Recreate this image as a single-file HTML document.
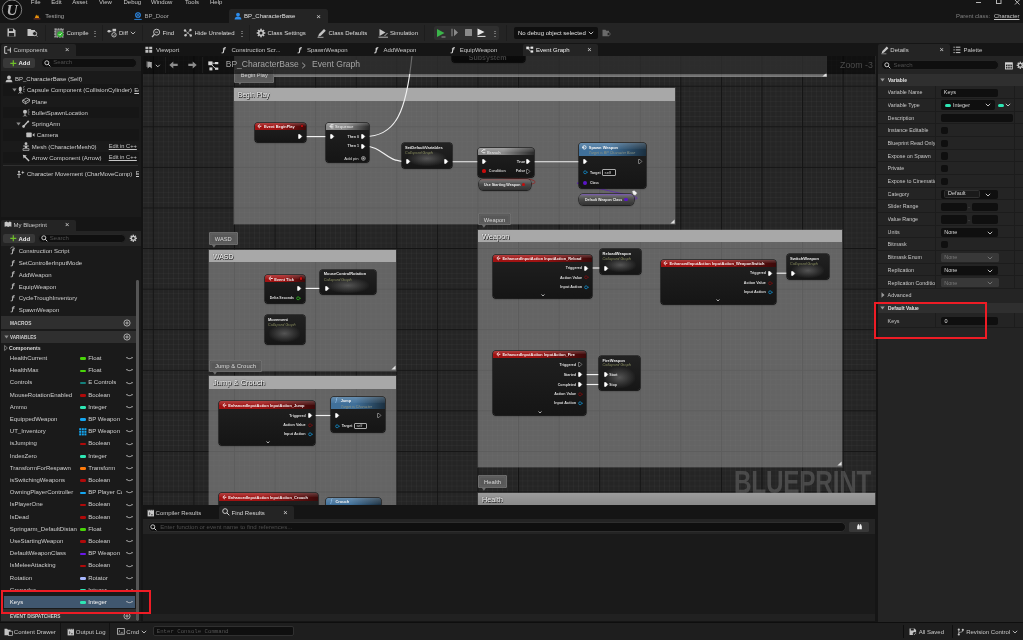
<!DOCTYPE html>
<html lang="en"><head><meta charset="utf-8"><title>BP_CharacterBase</title><style>html,body{margin:0;padding:0;background:#151515;}body{width:1023px;height:640px;position:relative;overflow:hidden;font-family:'Liberation Sans',sans-serif;}div,span.t,svg{position:absolute;}#app{left:0;top:0;width:1023px;height:640px;will-change:transform;overflow:hidden;}span.t{white-space:nowrap;}svg{overflow:visible;}</style></head><body><div id="app">
<div style="left:0.00px;top:0.00px;width:1023.00px;height:22.50px;background:#151515;"></div>
<svg style="left:1.00px;top:-1.00px;" width="22" height="22" viewBox="0 0 22 22"><circle cx="11" cy="10.7" r="9.7" fill="#0e0e0e" stroke="#8c8c8c" stroke-width="0.9"/><text x="11.2" y="16.2" text-anchor="middle" font-family="Liberation Serif,serif" font-weight="700" font-style="italic" font-size="15.5" fill="#b4b4b4">U</text></svg>
<span class="t" style="top:-1.70px;font-size:6.0px;line-height:8.4px;color:#c8c8c8;left:30.80px;">File</span>
<span class="t" style="top:-1.70px;font-size:6.0px;line-height:8.4px;color:#c8c8c8;left:51.30px;">Edit</span>
<span class="t" style="top:-1.70px;font-size:6.0px;line-height:8.4px;color:#c8c8c8;left:72.30px;">Asset</span>
<span class="t" style="top:-1.70px;font-size:6.0px;line-height:8.4px;color:#c8c8c8;left:99.00px;">View</span>
<span class="t" style="top:-1.70px;font-size:6.0px;line-height:8.4px;color:#c8c8c8;left:123.50px;">Debug</span>
<span class="t" style="top:-1.70px;font-size:6.0px;line-height:8.4px;color:#c8c8c8;left:151.00px;">Window</span>
<span class="t" style="top:-1.70px;font-size:6.0px;line-height:8.4px;color:#c8c8c8;left:185.00px;">Tools</span>
<span class="t" style="top:-1.70px;font-size:6.0px;line-height:8.4px;color:#c8c8c8;left:210.00px;">Help</span>
<svg style="left:974.00px;top:0.00px;" width="48" height="6" viewBox="0 0 48 6"><path d="M2 2.5h5" stroke="#c8c8c8" stroke-width="0.9" fill="none"/><rect x="22.5" y="-1" width="4.5" height="4.5" stroke="#c8c8c8" stroke-width="0.9" fill="none"/><path d="M41 0l4.5 4.5M45.5 0l-4.5 4.5" stroke="#c8c8c8" stroke-width="0.9" fill="none"/></svg>
<svg style="left:33.00px;top:11.50px;" width="8" height="8" viewBox="0 0 8 8"><path d="M1.8 6L3.2 2.4l1 1.8L5 2.8 6.2 6z" fill="#e8930c"/><path d="M0.6 6.9h6.8" stroke="#8c3a2c" stroke-width="0.9"/></svg>
<span class="t" style="top:12.20px;font-size:6.0px;line-height:8.4px;color:#a8a8a8;left:45.20px;">Testing</span>
<svg style="left:133.50px;top:11.50px;" width="8" height="8" viewBox="0 0 8 8"><circle cx="4" cy="3" r="2.3" fill="none" stroke="#2d8ceb" stroke-width="1.1"/><path d="M0.3 7.4h7.4" stroke="#2d8ceb" stroke-width="0.9"/><circle cx="4" cy="3" r="0.9" fill="#2d8ceb"/></svg>
<span class="t" style="top:12.20px;font-size:6.0px;line-height:8.4px;color:#a8a8a8;left:144.50px;">BP_Door</span>
<div style="left:229.00px;top:8.80px;width:98.50px;height:14.00px;background:#242424;border-radius:2.5px 2.5px 0 0;"></div>
<svg style="left:233.50px;top:11.50px;" width="8" height="8" viewBox="0 0 8 8"><circle cx="4" cy="2.6" r="1.9" fill="#2d8ceb"/><path d="M0.6 7.6c0-2.3 1.4-3.2 3.4-3.2s3.4 0.9 3.4 3.2z" fill="#2d8ceb"/></svg>
<span class="t" style="top:12.20px;font-size:6.0px;line-height:8.4px;color:#e0e0e0;left:244.00px;">BP_CharacterBase</span>
<span class="t" style="top:10.80px;font-size:8px;line-height:11.2px;color:#d0d0d0;left:318.50px;transform:translateX(-50%);">×</span>
<span class="t" style="top:11.97px;font-size:5.9px;line-height:8.26px;color:#808080;left:956.00px;">Parent class:</span>
<span class="t" style="top:12.04px;font-size:5.8px;line-height:8.12px;color:#c8c8c8;left:994.00px;text-decoration:underline;">Character</span>
<div style="left:0.00px;top:22.50px;width:1023.00px;height:20.50px;background:#242424;"></div>
<svg style="left:7.00px;top:28.00px;" width="9" height="9" viewBox="0 0 9 9"><path d="M0.5 0.5h6l2 2v6h-8z" fill="#c4c4c4"/><rect x="2" y="0.5" width="4" height="2.6" fill="#242424"/><rect x="1.8" y="5" width="5.4" height="3.5" fill="#242424"/></svg>
<svg style="left:27.00px;top:28.00px;" width="11" height="9" viewBox="0 0 11 9"><path d="M0.5 1h3l1 1h3.5v6h-7.5z" fill="#c4c4c4"/><circle cx="7.6" cy="5.6" r="2.1" fill="#242424" stroke="#c4c4c4" stroke-width="0.9"/><path d="M9 7.2l1.4 1.4" stroke="#c4c4c4" stroke-width="0.9"/></svg>
<div style="left:45.00px;top:24.50px;width:0.80px;height:16.50px;background:#1d1d1d;"></div>
<svg style="left:54.00px;top:27.50px;" width="10" height="10" viewBox="0 0 10 10"><rect x="1" y="1" width="8" height="8" fill="#6a6a6a" stroke="#c4c4c4" stroke-width="1.1" stroke-dasharray="1.8 0.8"/><circle cx="6.2" cy="6.2" r="3" fill="#34b233"/><path d="M4.8 6.2l1 1 1.8-2" stroke="#fff" stroke-width="0.8" fill="none"/></svg>
<span class="t" style="top:28.90px;font-size:6.0px;line-height:8.4px;color:#dcdcdc;left:66.50px;">Compile</span>
<span class="t" style="top:27.50px;font-size:8px;line-height:11.2px;color:#c0c0c0;left:94.70px;transform:translateX(-50%);">⋮</span>
<div style="left:101.50px;top:24.50px;width:0.80px;height:16.50px;background:#1d1d1d;"></div>
<svg style="left:107.00px;top:27.50px;" width="11" height="10" viewBox="0 0 11 10"><path d="M0.5 3.2h4" stroke="#c4c4c4" stroke-width="1"/><circle cx="2" cy="3.2" r="1.3" fill="#c4c4c4"/><rect x="5.5" y="0.8" width="3.6" height="2.6" fill="#c4c4c4"/><circle cx="7" cy="6.8" r="2.2" fill="none" stroke="#c4c4c4" stroke-width="0.9"/><path d="M6 6.8l0.8 0.8 1.3-1.5" stroke="#c4c4c4" stroke-width="0.7" fill="none"/></svg>
<span class="t" style="top:28.90px;font-size:6.0px;line-height:8.4px;color:#dcdcdc;left:119.00px;">Diff</span>
<svg style="left:130.00px;top:30.50px;" width="6" height="4" viewBox="0 0 6 4"><path d="M0.8 0.8l2.2 2.2 2.2-2.2" stroke="#c4c4c4" stroke-width="0.9" fill="none"/></svg>
<div style="left:142.00px;top:24.50px;width:0.80px;height:16.50px;background:#1d1d1d;"></div>
<svg style="left:151.00px;top:27.50px;" width="10" height="10" viewBox="0 0 10 10"><circle cx="5.6" cy="4.2" r="3" fill="none" stroke="#c4c4c4" stroke-width="1"/><path d="M3.4 6.4l-2.4 2.6" stroke="#c4c4c4" stroke-width="1.2"/><path d="M4.2 4.2h2.8" stroke="#c4c4c4" stroke-width="0.8"/></svg>
<span class="t" style="top:28.90px;font-size:6.0px;line-height:8.4px;color:#dcdcdc;left:162.50px;">Find</span>
<svg style="left:183.00px;top:27.50px;" width="10" height="10" viewBox="0 0 10 10"><circle cx="2" cy="2.5" r="1.2" fill="#c4c4c4"/><circle cx="7.5" cy="2" r="1.2" fill="#c4c4c4"/><circle cx="7.8" cy="7.5" r="1.2" fill="#c4c4c4"/><circle cx="2.5" cy="7.2" r="1.2" fill="#c4c4c4"/><path d="M2 2.5L7.8 7.5M7.5 2L2.5 7.2" stroke="#c4c4c4" stroke-width="0.7"/></svg>
<span class="t" style="top:28.90px;font-size:6.0px;line-height:8.4px;color:#dcdcdc;left:194.50px;">Hide Unrelated</span>
<span class="t" style="top:27.50px;font-size:8px;line-height:11.2px;color:#c0c0c0;left:242.00px;transform:translateX(-50%);">⋮</span>
<div style="left:248.50px;top:24.50px;width:0.80px;height:16.50px;background:#1d1d1d;"></div>
<svg style="left:256.00px;top:27.80px;" width="10" height="10" viewBox="0 0 10 10"><g transform="translate(5,5)"><rect x="-0.8" y="-4.3" width="1.6" height="8.6" fill="#c4c4c4" transform="rotate(0)"/><rect x="-0.8" y="-4.3" width="1.6" height="8.6" fill="#c4c4c4" transform="rotate(45)"/><rect x="-0.8" y="-4.3" width="1.6" height="8.6" fill="#c4c4c4" transform="rotate(90)"/><rect x="-0.8" y="-4.3" width="1.6" height="8.6" fill="#c4c4c4" transform="rotate(135)"/><circle r="3" fill="#c4c4c4"/><circle r="1.5" fill="#242424"/></g></svg>
<span class="t" style="top:28.90px;font-size:6.0px;line-height:8.4px;color:#dcdcdc;left:267.50px;">Class Settings</span>
<svg style="left:317.00px;top:27.50px;" width="10" height="10" viewBox="0 0 10 10"><path d="M1 8.8l1-2.8 5-5 1.8 1.8-5 5z" fill="#c4c4c4"/><path d="M0.5 9.3h6" stroke="#c4c4c4" stroke-width="0.8"/></svg>
<span class="t" style="top:28.90px;font-size:6.0px;line-height:8.4px;color:#dcdcdc;left:328.50px;">Class Defaults</span>
<svg style="left:378.00px;top:27.50px;" width="11" height="10" viewBox="0 0 11 10"><path d="M1.5 1l6 3.5-6 3.5z" fill="#c4c4c4"/><path d="M0.5 9.2h9.5" stroke="#c4c4c4" stroke-width="0.9"/><path d="M6.5 8l3-3" stroke="#c4c4c4" stroke-width="0.9"/></svg>
<span class="t" style="top:28.90px;font-size:6.0px;line-height:8.4px;color:#dcdcdc;left:390.00px;">Simulation</span>
<div style="left:424.30px;top:24.50px;width:0.80px;height:16.50px;background:#1d1d1d;"></div>
<div style="left:433.50px;top:26.00px;width:65.00px;height:13.50px;background:#2f2f2f;border-radius:2px;"></div>
<div style="left:505.70px;top:24.50px;width:0.80px;height:16.50px;background:#1d1d1d;"></div>
<svg style="left:436.00px;top:27.50px;" width="10" height="10" viewBox="0 0 10 10"><path d="M1 1l7.5 4-7.5 4z" fill="#3bb54a"/><path d="M5.5 9h4" stroke="#b0b0b0" stroke-width="0.8"/></svg>
<svg style="left:451.00px;top:28.00px;" width="8" height="9" viewBox="0 0 8 9"><path d="M1 0.8v7.4" stroke="#8a8a8a" stroke-width="1.1"/><path d="M3 0.8l4 3.7-4 3.7z" fill="#8a8a8a"/></svg>
<div style="left:465.00px;top:29.00px;width:7.00px;height:7.00px;background:#8a8a8a;border-radius:0.5px;"></div>
<svg style="left:476.50px;top:28.00px;" width="9" height="9" viewBox="0 0 9 9"><path d="M0.5 0.5l7 3.5-7 3.5z" fill="#e8e8e8"/><path d="M0.5 8.4h8" stroke="#e8e8e8" stroke-width="1"/></svg>
<span class="t" style="top:27.50px;font-size:8px;line-height:11.2px;color:#c0c0c0;left:494.50px;transform:translateX(-50%);">⋮</span>
<div style="left:514.30px;top:26.60px;width:83.70px;height:12.20px;background:#0f0f0f;border-radius:2px;"></div>
<span class="t" style="top:29.10px;font-size:6.0px;line-height:8.4px;color:#e0e0e0;left:518.00px;">No debug object selected</span>
<svg style="left:587.50px;top:30.80px;" width="6" height="4" viewBox="0 0 6 4"><path d="M0.8 0.8l2.2 2.2 2.2-2.2" stroke="#d0d0d0" stroke-width="0.9" fill="none"/></svg>
<svg style="left:601.50px;top:28.50px;" width="9" height="8" viewBox="0 0 9 8"><path d="M0.5 0.8h3l0.8 0.9h2.7v5.6h-6.5z" fill="#6a6a6a"/><circle cx="6.6" cy="5" r="1.6" fill="#242424" stroke="#6a6a6a" stroke-width="0.7"/></svg>
<div style="left:0.00px;top:43.00px;width:141.00px;height:580.00px;background:#151515;"></div>
<div style="left:1.00px;top:44.00px;width:75.00px;height:12.00px;background:#242424;border-radius:2px 2px 0 0;"></div>
<svg style="left:3.50px;top:46.30px;" width="8" height="8" viewBox="0 0 8 8"><path d="M3.2 0.7h-2.5v6.6h2.5" fill="none" stroke="#c8c8c8" stroke-width="1"/><path d="M3.4 4h3M6.4 1.6v5" fill="none" stroke="#c8c8c8" stroke-width="1"/></svg>
<span class="t" style="top:46.40px;font-size:6.0px;line-height:8.4px;color:#c8c8c8;left:13.50px;">Components</span>
<span class="t" style="top:45.35px;font-size:7.5px;line-height:10.5px;color:#d0d0d0;left:67.30px;transform:translateX(-50%);">×</span>
<div style="left:1.00px;top:56.00px;width:139.50px;height:14.50px;background:#242424;"></div>
<div style="left:3.20px;top:58.00px;width:31.70px;height:9.60px;background:#383838;border-radius:2px;"></div><svg style="left:9.80px;top:59.70px;" width="7" height="7" viewBox="0 0 7 7"><path d="M3.3 0.3v6M0.3 3.3h6" stroke="#6fbf2a" stroke-width="1.2"/></svg><span class="t" style="top:59.00px;font-size:6.0px;line-height:8.4px;color:#e8e8e8;font-weight:700;left:18.40px;">Add</span>
<div style="left:40.80px;top:57.90px;width:96.00px;height:9.70px;background:#0f0f0f;border-radius:4.85px;border:0.5px solid #262626;box-sizing:border-box;"></div><svg style="left:43.80px;top:59.55px;" width="7" height="7" viewBox="0 0 7 7"><circle cx="2.8" cy="2.8" r="2" fill="none" stroke="#d8d8d8" stroke-width="0.9"/><path d="M4.3 4.3l2 2" stroke="#d8d8d8" stroke-width="1"/></svg><span class="t" style="top:58.45px;font-size:6.0px;line-height:8.4px;color:#505050;left:53.20px;">Search</span>
<div style="left:1.00px;top:70.50px;width:139.50px;height:146.50px;background:#1a1a1a;"></div>
<span class="t" style="top:75.15px;font-size:6.0px;line-height:8.4px;color:#cecece;left:15.00px;">BP_CharacterBase (Self)</span>
<svg style="left:5.00px;top:74.75px;" width="8" height="8" viewBox="0 0 8 8"><circle cx="4" cy="2.4" r="1.9" fill="#c0c0c0"/><path d="M0.6 7.2c0-2.2 1.4-2.8 3.4-2.8s3.4 0.6 3.4 2.8z" fill="#c0c0c0"/></svg>
<div style="left:3.00px;top:84.40px;width:135.50px;height:11.20px;background:#161616;"></div>
<span class="t" style="top:86.40px;font-size:6.0px;line-height:8.4px;color:#cecece;left:27.00px;">Capsule Component (CollisionCylinder)</span>
<svg style="left:11.50px;top:88.00px;" width="5" height="4" viewBox="0 0 5 4"><path d="M0.3 0.5h4.4l-2.2 3z" fill="#8a8a8a"/></svg>
<svg style="left:17.00px;top:86.00px;" width="8" height="8" viewBox="0 0 8 8"><ellipse cx="3.3" cy="3" rx="1.6" ry="2.6" fill="#c0c0c0"/><path d="M3.3 5v2.6M1.5 7.6l1.8-2 1.8 2M6 1.5l1.5-1M6 3.2h1.7M6 4.8l1.5 1" stroke="#c0c0c0" stroke-width="0.7" fill="none"/></svg>
<div style="left:134.00px;top:86.00px;width:5.00px;height:8.00px;overflow:hidden;"><span class="t" style="left:0.3px;top:-0.3px;font-size:6.0px;line-height:8.6px;color:#cecece;text-decoration:underline;">Edit in C++</span></div>
<span class="t" style="top:97.65px;font-size:6.0px;line-height:8.4px;color:#cecece;left:31.80px;">Plane</span>
<svg style="left:21.50px;top:97.25px;" width="8" height="8" viewBox="0 0 8 8"><path d="M0.7 3.2l3.8-2 3 1.2-3.8 2.2zM0.7 3.2v2l3 1.6v-2.2M3.7 6.8l3.8-2.4v-2" fill="none" stroke="#c0c0c0" stroke-width="0.8"/></svg>
<div style="left:3.00px;top:106.90px;width:135.50px;height:11.20px;background:#161616;"></div>
<span class="t" style="top:108.90px;font-size:6.0px;line-height:8.4px;color:#cecece;left:31.80px;">BulletSpawnLocation</span>
<svg style="left:21.50px;top:108.50px;" width="8" height="8" viewBox="0 0 8 8"><circle cx="3" cy="2.8" r="2" fill="#c0c0c0"/><path d="M3 4.5v3M1.3 7.5l1.7-1.8 1.7 1.8M5.8 1.5l1.5-1M5.8 3h1.7M5.8 4.5l1.5 1" stroke="#c0c0c0" stroke-width="0.7" fill="none"/></svg>
<span class="t" style="top:120.15px;font-size:6.0px;line-height:8.4px;color:#cecece;left:31.80px;">SpringArm</span>
<svg style="left:15.50px;top:121.75px;" width="5" height="4" viewBox="0 0 5 4"><path d="M0.3 0.5h4.4l-2.2 3z" fill="#8a8a8a"/></svg>
<svg style="left:21.50px;top:119.75px;" width="8" height="8" viewBox="0 0 8 8"><path d="M1 7l5-5.5" stroke="#c0c0c0" stroke-width="1.3"/><circle cx="1.6" cy="6.4" r="1.3" fill="#c0c0c0"/><circle cx="6.2" cy="1.6" r="1" fill="#c0c0c0"/></svg>
<div style="left:3.00px;top:129.40px;width:135.50px;height:11.20px;background:#161616;"></div>
<span class="t" style="top:131.40px;font-size:6.0px;line-height:8.4px;color:#cecece;left:36.80px;">Camera</span>
<svg style="left:26.00px;top:132.00px;" width="9" height="6" viewBox="0 0 9 6"><rect x="0.3" y="0.6" width="5.4" height="4.6" rx="0.6" fill="#c0c0c0"/><path d="M6.3 2.9l2.2-1.8v3.6z" fill="#c0c0c0"/></svg>
<span class="t" style="top:142.65px;font-size:6.0px;line-height:8.4px;color:#cecece;left:31.80px;">Mesh (CharacterMesh0)</span>
<svg style="left:21.50px;top:142.05px;" width="8" height="9" viewBox="0 0 8 9"><circle cx="4" cy="1.7" r="1.4" fill="#c0c0c0"/><path d="M1.2 3.4h5.6v1h-1.6v1.6h-2.4v-1.6h-1.6z" fill="#c0c0c0"/><path d="M1 6.6h6v1.8h-6z" fill="none" stroke="#c0c0c0" stroke-width="0.7"/></svg>
<span class="t" style="top:142.86px;font-size:5.7px;line-height:7.98px;color:#c6c6c6;left:108.70px;text-decoration:underline;">Edit in C++</span>
<div style="left:3.00px;top:151.90px;width:135.50px;height:11.20px;background:#161616;"></div>
<span class="t" style="top:153.90px;font-size:6.0px;line-height:8.4px;color:#cecece;left:31.80px;">Arrow Component (Arrow)</span>
<svg style="left:21.50px;top:153.50px;" width="8" height="8" viewBox="0 0 8 8"><path d="M0.8 0.8l4 0.6-1.2 1 4 4-1 1-4-4-1 1.2z" fill="#c0c0c0"/></svg>
<span class="t" style="top:154.11px;font-size:5.7px;line-height:7.98px;color:#c6c6c6;left:108.70px;text-decoration:underline;">Edit in C++</span>
<div style="left:3.00px;top:164.70px;width:135.00px;height:1.40px;background:#2f2f2f;"></div>
<svg style="left:16.00px;top:169.50px;" width="9" height="9" viewBox="0 0 9 9"><circle cx="3" cy="1.8" r="1.1" fill="#c0c0c0"/><path d="M3 3v5M1.2 4.5h3.6" stroke="#c0c0c0" stroke-width="0.9"/><path d="M6.8 0.6l0.5 1.3 1.3 0.5-1.3 0.5-0.5 1.3-0.5-1.3-1.3-0.5 1.3-0.5z" fill="#c0c0c0"/></svg>
<span class="t" style="top:170.15px;font-size:6.0px;line-height:8.4px;color:#cecece;left:27.00px;">Character Movement (CharMoveComp)</span>
<div style="left:135.50px;top:169.70px;width:3.50px;height:8.00px;overflow:hidden;"><span class="t" style="left:0.3px;top:-0.3px;font-size:6.0px;line-height:8.6px;color:#cecece;text-decoration:underline;">Edit</span></div>
<div style="left:1.00px;top:219.50px;width:75.00px;height:11.80px;background:#242424;border-radius:2px 2px 0 0;"></div>
<svg style="left:3.50px;top:221.00px;" width="8" height="8" viewBox="0 0 8 8"><path d="M0.6 1.2l2-0.6 1.6 0.8 1.6-0.8 1.6 0.6v4.6l-1.6-0.6-1.6 0.8-1.6-0.8-2 0.6z" fill="#c8c8c8"/></svg>
<span class="t" style="top:221.10px;font-size:6.0px;line-height:8.4px;color:#c8c8c8;left:13.50px;">My Blueprint</span>
<span class="t" style="top:220.05px;font-size:7.5px;line-height:10.5px;color:#d0d0d0;left:67.30px;transform:translateX(-50%);">×</span>
<div style="left:1.00px;top:231.00px;width:139.50px;height:14.50px;background:#242424;"></div>
<div style="left:3.20px;top:233.50px;width:31.70px;height:9.60px;background:#383838;border-radius:2px;"></div><svg style="left:9.80px;top:235.20px;" width="7" height="7" viewBox="0 0 7 7"><path d="M3.3 0.3v6M0.3 3.3h6" stroke="#6fbf2a" stroke-width="1.2"/></svg><span class="t" style="top:234.50px;font-size:6.0px;line-height:8.4px;color:#e8e8e8;font-weight:700;left:18.40px;">Add</span>
<div style="left:38.00px;top:233.50px;width:88.00px;height:9.70px;background:#0f0f0f;border-radius:4.85px;border:0.5px solid #262626;box-sizing:border-box;"></div><svg style="left:41.00px;top:235.15px;" width="7" height="7" viewBox="0 0 7 7"><circle cx="2.8" cy="2.8" r="2" fill="none" stroke="#d8d8d8" stroke-width="0.9"/><path d="M4.3 4.3l2 2" stroke="#d8d8d8" stroke-width="1"/></svg><span class="t" style="top:234.05px;font-size:6.0px;line-height:8.4px;color:#505050;left:49.80px;">Search</span>
<svg style="left:128.50px;top:234.30px;" width="9" height="9" viewBox="0 0 9 9"><g transform="translate(4.3,4.3)"><rect x="-0.7" y="-3.6" width="1.4" height="7.2" fill="#c4c4c4" transform="rotate(0)"/><rect x="-0.7" y="-3.6" width="1.4" height="7.2" fill="#c4c4c4" transform="rotate(45)"/><rect x="-0.7" y="-3.6" width="1.4" height="7.2" fill="#c4c4c4" transform="rotate(90)"/><rect x="-0.7" y="-3.6" width="1.4" height="7.2" fill="#c4c4c4" transform="rotate(135)"/><circle r="2.5" fill="#c4c4c4"/><circle r="1.2" fill="#242424"/></g></svg>
<div style="left:1.00px;top:245.50px;width:134.50px;height:376.00px;background:#1a1a1a;"></div>
<div style="left:135.50px;top:245.50px;width:5.00px;height:376.00px;background:#1a1a1a;"></div>
<div style="left:135.80px;top:280.00px;width:2.90px;height:341.00px;background:#555555;border-radius:1.4px;"></div>
<span class="t" style="top:246.96px;font-size:6.2px;line-height:8.68px;color:#b8b8b8;font-weight:700;left:11.40px;font-family:'DejaVu Sans',sans-serif;font-style:italic;">ƒ</span>
<svg style="left:9.50px;top:246.00px;" width="5" height="4" viewBox="0 0 5 4"><path d="M0.5 2.5c0.5-1.8 3-2 4-0.6" fill="none" stroke="#b8b8b8" stroke-width="0.7"/></svg>
<span class="t" style="top:247.40px;font-size:6.0px;line-height:8.4px;color:#cecece;left:18.70px;">Construction Script</span>
<span class="t" style="top:258.66px;font-size:6.2px;line-height:8.68px;color:#b8b8b8;font-weight:700;left:11.40px;font-family:'DejaVu Sans',sans-serif;font-style:italic;">ƒ</span>
<span class="t" style="top:259.10px;font-size:6.0px;line-height:8.4px;color:#cecece;left:18.70px;">SetControllerInputMode</span>
<span class="t" style="top:270.36px;font-size:6.2px;line-height:8.68px;color:#b8b8b8;font-weight:700;left:11.40px;font-family:'DejaVu Sans',sans-serif;font-style:italic;">ƒ</span>
<span class="t" style="top:270.80px;font-size:6.0px;line-height:8.4px;color:#cecece;left:18.70px;">AddWeapon</span>
<span class="t" style="top:282.06px;font-size:6.2px;line-height:8.68px;color:#b8b8b8;font-weight:700;left:11.40px;font-family:'DejaVu Sans',sans-serif;font-style:italic;">ƒ</span>
<span class="t" style="top:282.50px;font-size:6.0px;line-height:8.4px;color:#cecece;left:18.70px;">EquipWeapon</span>
<span class="t" style="top:293.76px;font-size:6.2px;line-height:8.68px;color:#b8b8b8;font-weight:700;left:11.40px;font-family:'DejaVu Sans',sans-serif;font-style:italic;">ƒ</span>
<span class="t" style="top:294.20px;font-size:6.0px;line-height:8.4px;color:#cecece;left:18.70px;">CycleTroughInventory</span>
<span class="t" style="top:305.46px;font-size:6.2px;line-height:8.68px;color:#b8b8b8;font-weight:700;left:11.40px;font-family:'DejaVu Sans',sans-serif;font-style:italic;">ƒ</span>
<span class="t" style="top:305.90px;font-size:6.0px;line-height:8.4px;color:#cecece;left:18.70px;">SpawnWeapon</span>
<div style="left:1.00px;top:316.20px;width:134.50px;height:13.00px;background:#2f2f2f;"></div>
<span class="t" style="top:319.59px;font-size:5.3px;line-height:7.42px;color:#d0d0d0;font-weight:700;left:9.85px;transform:scaleX(0.906);transform-origin:0 50%;">MACROS</span>
<svg style="left:123.00px;top:318.70px;" width="8" height="8" viewBox="0 0 8 8"><circle cx="4" cy="4" r="3.1" fill="none" stroke="#c8c8c8" stroke-width="0.8"/><path d="M4 2.3v3.4M2.3 4h3.4" stroke="#c8c8c8" stroke-width="0.8"/></svg>
<div style="left:1.00px;top:330.80px;width:134.50px;height:12.70px;background:#2f2f2f;"></div>
<svg style="left:4.00px;top:335.00px;" width="5" height="4" viewBox="0 0 5 4"><path d="M0.3 0.5h4.4l-2.2 3z" fill="#8a8a8a"/></svg>
<span class="t" style="top:333.89px;font-size:5.3px;line-height:7.42px;color:#d0d0d0;font-weight:700;left:9.85px;transform:scaleX(0.873);transform-origin:0 50%;">VARIABLES</span>
<svg style="left:123.00px;top:332.70px;" width="8" height="8" viewBox="0 0 8 8"><circle cx="4" cy="4" r="3.1" fill="none" stroke="#c8c8c8" stroke-width="0.8"/><path d="M4 2.3v3.4M2.3 4h3.4" stroke="#c8c8c8" stroke-width="0.8"/></svg>
<svg style="left:3.50px;top:345.00px;" width="4" height="6" viewBox="0 0 4 6"><path d="M0.6 0.5l2.8 2.5-2.8 2.5z" fill="none" stroke="#9a9a9a" stroke-width="0.7"/></svg>
<span class="t" style="top:344.76px;font-size:5.2px;line-height:7.28px;color:#d8d8d8;font-weight:700;left:8.90px;">Components</span>
<div style="left:0.00px;top:350.00px;width:141.00px;height:241.00px;overflow:hidden;"><div style="left:0;top:-350px;width:141px;height:700px;"><div style="left:9.80px;top:353.90px;width:67.50px;height:9.00px;overflow:hidden;"><span class="t" style="left:0;top:0.2px;font-size:6.0px;line-height:8.6px;color:#cecece;">HealthCurrent</span></div><div style="left:79.50px;top:357.40px;width:6.30px;height:2.60px;background:#48d408;border-radius:1.3px;"></div><div style="left:88.20px;top:353.90px;width:33.80px;height:9.00px;overflow:hidden;"><span class="t" style="left:0;top:0.2px;font-size:6.0px;line-height:8.6px;color:#cecece;">Float</span></div><svg style="left:125.50px;top:356.20px;" width="8" height="4" viewBox="0 0 8 4"><path d="M0.5 1c1.3 2.2 4.7 2.2 6 0" fill="none" stroke="#d0d0d0" stroke-width="0.8"/><path d="M0.3 1.9l0.8-0.6M6.7 1.9l-0.8-0.6" stroke="#d0d0d0" stroke-width="0.6"/></svg><div style="left:9.80px;top:366.10px;width:67.50px;height:9.00px;overflow:hidden;"><span class="t" style="left:0;top:0.2px;font-size:6.0px;line-height:8.6px;color:#cecece;">HealthMax</span></div><div style="left:79.50px;top:369.60px;width:6.30px;height:2.60px;background:#48d408;border-radius:1.3px;"></div><div style="left:88.20px;top:366.10px;width:33.80px;height:9.00px;overflow:hidden;"><span class="t" style="left:0;top:0.2px;font-size:6.0px;line-height:8.6px;color:#cecece;">Float</span></div><svg style="left:125.50px;top:368.40px;" width="8" height="4" viewBox="0 0 8 4"><path d="M0.5 1c1.3 2.2 4.7 2.2 6 0" fill="none" stroke="#d0d0d0" stroke-width="0.8"/><path d="M0.3 1.9l0.8-0.6M6.7 1.9l-0.8-0.6" stroke="#d0d0d0" stroke-width="0.6"/></svg><div style="left:9.80px;top:378.30px;width:67.50px;height:9.00px;overflow:hidden;"><span class="t" style="left:0;top:0.2px;font-size:6.0px;line-height:8.6px;color:#cecece;">Controls</span></div><div style="left:79.50px;top:381.80px;width:6.30px;height:2.60px;background:#14807c;border-radius:1.3px;"></div><div style="left:88.20px;top:378.30px;width:33.80px;height:9.00px;overflow:hidden;"><span class="t" style="left:0;top:0.2px;font-size:6.0px;line-height:8.6px;color:#cecece;">E Controls</span></div><svg style="left:125.50px;top:380.60px;" width="8" height="4" viewBox="0 0 8 4"><path d="M0.5 1c1.3 2.2 4.7 2.2 6 0" fill="none" stroke="#d0d0d0" stroke-width="0.8"/><path d="M0.3 1.9l0.8-0.6M6.7 1.9l-0.8-0.6" stroke="#d0d0d0" stroke-width="0.6"/></svg><div style="left:9.80px;top:390.50px;width:67.50px;height:9.00px;overflow:hidden;"><span class="t" style="left:0;top:0.2px;font-size:6.0px;line-height:8.6px;color:#cecece;">MouseRotationEnabled</span></div><div style="left:79.50px;top:394.00px;width:6.30px;height:2.60px;background:#b00a0a;border-radius:1.3px;"></div><div style="left:88.20px;top:390.50px;width:33.80px;height:9.00px;overflow:hidden;"><span class="t" style="left:0;top:0.2px;font-size:6.0px;line-height:8.6px;color:#cecece;">Boolean</span></div><svg style="left:125.50px;top:392.80px;" width="8" height="4" viewBox="0 0 8 4"><path d="M0.5 1c1.3 2.2 4.7 2.2 6 0" fill="none" stroke="#d0d0d0" stroke-width="0.8"/><path d="M0.3 1.9l0.8-0.6M6.7 1.9l-0.8-0.6" stroke="#d0d0d0" stroke-width="0.6"/></svg><div style="left:9.80px;top:402.70px;width:67.50px;height:9.00px;overflow:hidden;"><span class="t" style="left:0;top:0.2px;font-size:6.0px;line-height:8.6px;color:#cecece;">Ammo</span></div><div style="left:79.50px;top:406.20px;width:6.30px;height:2.60px;background:#2ee6b4;border-radius:1.3px;"></div><div style="left:88.20px;top:402.70px;width:33.80px;height:9.00px;overflow:hidden;"><span class="t" style="left:0;top:0.2px;font-size:6.0px;line-height:8.6px;color:#cecece;">Integer</span></div><svg style="left:125.50px;top:405.00px;" width="8" height="4" viewBox="0 0 8 4"><path d="M0.5 1c1.3 2.2 4.7 2.2 6 0" fill="none" stroke="#d0d0d0" stroke-width="0.8"/><path d="M0.3 1.9l0.8-0.6M6.7 1.9l-0.8-0.6" stroke="#d0d0d0" stroke-width="0.6"/></svg><div style="left:9.80px;top:414.90px;width:67.50px;height:9.00px;overflow:hidden;"><span class="t" style="left:0;top:0.2px;font-size:6.0px;line-height:8.6px;color:#cecece;">EquippedWeapon</span></div><div style="left:79.50px;top:418.40px;width:6.30px;height:2.60px;background:#14a6f0;border-radius:1.3px;"></div><div style="left:88.20px;top:414.90px;width:33.80px;height:9.00px;overflow:hidden;"><span class="t" style="left:0;top:0.2px;font-size:6.0px;line-height:8.6px;color:#cecece;">BP Weapon Base</span></div><svg style="left:125.50px;top:417.20px;" width="8" height="4" viewBox="0 0 8 4"><path d="M0.5 1c1.3 2.2 4.7 2.2 6 0" fill="none" stroke="#d0d0d0" stroke-width="0.8"/><path d="M0.3 1.9l0.8-0.6M6.7 1.9l-0.8-0.6" stroke="#d0d0d0" stroke-width="0.6"/></svg><div style="left:9.80px;top:427.10px;width:67.50px;height:9.00px;overflow:hidden;"><span class="t" style="left:0;top:0.2px;font-size:6.0px;line-height:8.6px;color:#cecece;">UT_Inventory</span></div><svg style="left:78.70px;top:427.60px;" width="8" height="8" viewBox="0 0 8 8"><rect x="0.2" y="0.2" width="2" height="2" fill="#14a6f0"/><rect x="0.2" y="2.8" width="2" height="2" fill="#14a6f0"/><rect x="0.2" y="5.4" width="2" height="2" fill="#14a6f0"/><rect x="2.8" y="0.2" width="2" height="2" fill="#14a6f0"/><rect x="2.8" y="2.8" width="2" height="2" fill="#14a6f0"/><rect x="2.8" y="5.4" width="2" height="2" fill="#14a6f0"/><rect x="5.4" y="0.2" width="2" height="2" fill="#14a6f0"/><rect x="5.4" y="2.8" width="2" height="2" fill="#14a6f0"/><rect x="5.4" y="5.4" width="2" height="2" fill="#14a6f0"/></svg><div style="left:88.20px;top:427.10px;width:33.80px;height:9.00px;overflow:hidden;"><span class="t" style="left:0;top:0.2px;font-size:6.0px;line-height:8.6px;color:#cecece;">BP Weapon Base</span></div><svg style="left:125.50px;top:429.40px;" width="8" height="4" viewBox="0 0 8 4"><path d="M0.5 1c1.3 2.2 4.7 2.2 6 0" fill="none" stroke="#d0d0d0" stroke-width="0.8"/><path d="M0.3 1.9l0.8-0.6M6.7 1.9l-0.8-0.6" stroke="#d0d0d0" stroke-width="0.6"/></svg><div style="left:9.80px;top:439.30px;width:67.50px;height:9.00px;overflow:hidden;"><span class="t" style="left:0;top:0.2px;font-size:6.0px;line-height:8.6px;color:#cecece;">isJumping</span></div><div style="left:79.50px;top:442.80px;width:6.30px;height:2.60px;background:#b00a0a;border-radius:1.3px;"></div><div style="left:88.20px;top:439.30px;width:33.80px;height:9.00px;overflow:hidden;"><span class="t" style="left:0;top:0.2px;font-size:6.0px;line-height:8.6px;color:#cecece;">Boolean</span></div><svg style="left:125.50px;top:441.60px;" width="8" height="4" viewBox="0 0 8 4"><path d="M0.5 1c1.3 2.2 4.7 2.2 6 0" fill="none" stroke="#d0d0d0" stroke-width="0.8"/><path d="M0.3 1.9l0.8-0.6M6.7 1.9l-0.8-0.6" stroke="#d0d0d0" stroke-width="0.6"/></svg><div style="left:9.80px;top:451.50px;width:67.50px;height:9.00px;overflow:hidden;"><span class="t" style="left:0;top:0.2px;font-size:6.0px;line-height:8.6px;color:#cecece;">IndexZero</span></div><div style="left:79.50px;top:455.00px;width:6.30px;height:2.60px;background:#2ee6b4;border-radius:1.3px;"></div><div style="left:88.20px;top:451.50px;width:33.80px;height:9.00px;overflow:hidden;"><span class="t" style="left:0;top:0.2px;font-size:6.0px;line-height:8.6px;color:#cecece;">Integer</span></div><svg style="left:125.50px;top:453.80px;" width="8" height="4" viewBox="0 0 8 4"><path d="M0.5 1c1.3 2.2 4.7 2.2 6 0" fill="none" stroke="#d0d0d0" stroke-width="0.8"/><path d="M0.3 1.9l0.8-0.6M6.7 1.9l-0.8-0.6" stroke="#d0d0d0" stroke-width="0.6"/></svg><div style="left:9.80px;top:463.70px;width:67.50px;height:9.00px;overflow:hidden;"><span class="t" style="left:0;top:0.2px;font-size:6.0px;line-height:8.6px;color:#cecece;">TransformForRespawn</span></div><div style="left:79.50px;top:467.20px;width:6.30px;height:2.60px;background:#ff7a0a;border-radius:1.3px;"></div><div style="left:88.20px;top:463.70px;width:33.80px;height:9.00px;overflow:hidden;"><span class="t" style="left:0;top:0.2px;font-size:6.0px;line-height:8.6px;color:#cecece;">Transform</span></div><svg style="left:125.50px;top:466.00px;" width="8" height="4" viewBox="0 0 8 4"><path d="M0.5 1c1.3 2.2 4.7 2.2 6 0" fill="none" stroke="#d0d0d0" stroke-width="0.8"/><path d="M0.3 1.9l0.8-0.6M6.7 1.9l-0.8-0.6" stroke="#d0d0d0" stroke-width="0.6"/></svg><div style="left:9.80px;top:475.90px;width:67.50px;height:9.00px;overflow:hidden;"><span class="t" style="left:0;top:0.2px;font-size:6.0px;line-height:8.6px;color:#cecece;">isSwitchingWeapons</span></div><div style="left:79.50px;top:479.40px;width:6.30px;height:2.60px;background:#b00a0a;border-radius:1.3px;"></div><div style="left:88.20px;top:475.90px;width:33.80px;height:9.00px;overflow:hidden;"><span class="t" style="left:0;top:0.2px;font-size:6.0px;line-height:8.6px;color:#cecece;">Boolean</span></div><svg style="left:125.50px;top:478.20px;" width="8" height="4" viewBox="0 0 8 4"><path d="M0.5 1c1.3 2.2 4.7 2.2 6 0" fill="none" stroke="#d0d0d0" stroke-width="0.8"/><path d="M0.3 1.9l0.8-0.6M6.7 1.9l-0.8-0.6" stroke="#d0d0d0" stroke-width="0.6"/></svg><div style="left:9.80px;top:488.10px;width:67.50px;height:9.00px;overflow:hidden;"><span class="t" style="left:0;top:0.2px;font-size:6.0px;line-height:8.6px;color:#cecece;">OwningPlayerController</span></div><div style="left:79.50px;top:491.60px;width:6.30px;height:2.60px;background:#14a6f0;border-radius:1.3px;"></div><div style="left:88.20px;top:488.10px;width:33.80px;height:9.00px;overflow:hidden;"><span class="t" style="left:0;top:0.2px;font-size:6.0px;line-height:8.6px;color:#cecece;">BP Player Controller</span></div><svg style="left:125.50px;top:490.40px;" width="8" height="4" viewBox="0 0 8 4"><path d="M0.5 1c1.3 2.2 4.7 2.2 6 0" fill="none" stroke="#d0d0d0" stroke-width="0.8"/><path d="M0.3 1.9l0.8-0.6M6.7 1.9l-0.8-0.6" stroke="#d0d0d0" stroke-width="0.6"/></svg><div style="left:9.80px;top:500.30px;width:67.50px;height:9.00px;overflow:hidden;"><span class="t" style="left:0;top:0.2px;font-size:6.0px;line-height:8.6px;color:#cecece;">IsPlayerOne</span></div><div style="left:79.50px;top:503.80px;width:6.30px;height:2.60px;background:#b00a0a;border-radius:1.3px;"></div><div style="left:88.20px;top:500.30px;width:33.80px;height:9.00px;overflow:hidden;"><span class="t" style="left:0;top:0.2px;font-size:6.0px;line-height:8.6px;color:#cecece;">Boolean</span></div><svg style="left:125.50px;top:502.60px;" width="8" height="4" viewBox="0 0 8 4"><path d="M0.5 1c1.3 2.2 4.7 2.2 6 0" fill="none" stroke="#d0d0d0" stroke-width="0.8"/><path d="M0.3 1.9l0.8-0.6M6.7 1.9l-0.8-0.6" stroke="#d0d0d0" stroke-width="0.6"/></svg><div style="left:9.80px;top:512.50px;width:67.50px;height:9.00px;overflow:hidden;"><span class="t" style="left:0;top:0.2px;font-size:6.0px;line-height:8.6px;color:#cecece;">IsDead</span></div><div style="left:79.50px;top:516.00px;width:6.30px;height:2.60px;background:#b00a0a;border-radius:1.3px;"></div><div style="left:88.20px;top:512.50px;width:33.80px;height:9.00px;overflow:hidden;"><span class="t" style="left:0;top:0.2px;font-size:6.0px;line-height:8.6px;color:#cecece;">Boolean</span></div><svg style="left:125.50px;top:514.80px;" width="8" height="4" viewBox="0 0 8 4"><path d="M0.5 1c1.3 2.2 4.7 2.2 6 0" fill="none" stroke="#d0d0d0" stroke-width="0.8"/><path d="M0.3 1.9l0.8-0.6M6.7 1.9l-0.8-0.6" stroke="#d0d0d0" stroke-width="0.6"/></svg><div style="left:9.80px;top:524.70px;width:67.50px;height:9.00px;overflow:hidden;"><span class="t" style="left:0;top:0.2px;font-size:6.0px;line-height:8.6px;color:#cecece;">Springarm_DefaultDistance</span></div><div style="left:79.50px;top:528.20px;width:6.30px;height:2.60px;background:#48d408;border-radius:1.3px;"></div><div style="left:88.20px;top:524.70px;width:33.80px;height:9.00px;overflow:hidden;"><span class="t" style="left:0;top:0.2px;font-size:6.0px;line-height:8.6px;color:#cecece;">Float</span></div><svg style="left:125.50px;top:527.00px;" width="8" height="4" viewBox="0 0 8 4"><path d="M0.5 1c1.3 2.2 4.7 2.2 6 0" fill="none" stroke="#d0d0d0" stroke-width="0.8"/><path d="M0.3 1.9l0.8-0.6M6.7 1.9l-0.8-0.6" stroke="#d0d0d0" stroke-width="0.6"/></svg><div style="left:9.80px;top:536.90px;width:67.50px;height:9.00px;overflow:hidden;"><span class="t" style="left:0;top:0.2px;font-size:6.0px;line-height:8.6px;color:#cecece;">UseStartingWeapon</span></div><div style="left:79.50px;top:540.40px;width:6.30px;height:2.60px;background:#b00a0a;border-radius:1.3px;"></div><div style="left:88.20px;top:536.90px;width:33.80px;height:9.00px;overflow:hidden;"><span class="t" style="left:0;top:0.2px;font-size:6.0px;line-height:8.6px;color:#cecece;">Boolean</span></div><svg style="left:125.50px;top:539.20px;" width="8" height="4" viewBox="0 0 8 4"><path d="M0.5 1c1.3 2.2 4.7 2.2 6 0" fill="none" stroke="#d0d0d0" stroke-width="0.8"/><path d="M0.3 1.9l0.8-0.6M6.7 1.9l-0.8-0.6" stroke="#d0d0d0" stroke-width="0.6"/></svg><div style="left:9.80px;top:549.10px;width:67.50px;height:9.00px;overflow:hidden;"><span class="t" style="left:0;top:0.2px;font-size:6.0px;line-height:8.6px;color:#cecece;">DefaultWeaponClass</span></div><div style="left:79.50px;top:552.60px;width:6.30px;height:2.60px;background:#6a18e8;border-radius:1.3px;"></div><div style="left:88.20px;top:549.10px;width:33.80px;height:9.00px;overflow:hidden;"><span class="t" style="left:0;top:0.2px;font-size:6.0px;line-height:8.6px;color:#cecece;">BP Weapon Base</span></div><svg style="left:125.50px;top:551.40px;" width="8" height="4" viewBox="0 0 8 4"><path d="M0.5 1c1.3 2.2 4.7 2.2 6 0" fill="none" stroke="#d0d0d0" stroke-width="0.8"/><path d="M0.3 1.9l0.8-0.6M6.7 1.9l-0.8-0.6" stroke="#d0d0d0" stroke-width="0.6"/></svg><div style="left:9.80px;top:561.30px;width:67.50px;height:9.00px;overflow:hidden;"><span class="t" style="left:0;top:0.2px;font-size:6.0px;line-height:8.6px;color:#cecece;">IsMeleeAttacking</span></div><div style="left:79.50px;top:564.80px;width:6.30px;height:2.60px;background:#b00a0a;border-radius:1.3px;"></div><div style="left:88.20px;top:561.30px;width:33.80px;height:9.00px;overflow:hidden;"><span class="t" style="left:0;top:0.2px;font-size:6.0px;line-height:8.6px;color:#cecece;">Boolean</span></div><svg style="left:125.50px;top:563.60px;" width="8" height="4" viewBox="0 0 8 4"><path d="M0.5 1c1.3 2.2 4.7 2.2 6 0" fill="none" stroke="#d0d0d0" stroke-width="0.8"/><path d="M0.3 1.9l0.8-0.6M6.7 1.9l-0.8-0.6" stroke="#d0d0d0" stroke-width="0.6"/></svg><div style="left:9.80px;top:573.50px;width:67.50px;height:9.00px;overflow:hidden;"><span class="t" style="left:0;top:0.2px;font-size:6.0px;line-height:8.6px;color:#cecece;">Rotation</span></div><div style="left:79.50px;top:577.00px;width:6.30px;height:2.60px;background:#a8b8ff;border-radius:1.3px;"></div><div style="left:88.20px;top:573.50px;width:33.80px;height:9.00px;overflow:hidden;"><span class="t" style="left:0;top:0.2px;font-size:6.0px;line-height:8.6px;color:#cecece;">Rotator</span></div><svg style="left:125.50px;top:575.80px;" width="8" height="4" viewBox="0 0 8 4"><path d="M0.5 1c1.3 2.2 4.7 2.2 6 0" fill="none" stroke="#d0d0d0" stroke-width="0.8"/><path d="M0.3 1.9l0.8-0.6M6.7 1.9l-0.8-0.6" stroke="#d0d0d0" stroke-width="0.6"/></svg><div style="left:9.80px;top:585.70px;width:67.50px;height:9.00px;overflow:hidden;"><span class="t" style="left:0;top:0.2px;font-size:6.0px;line-height:8.6px;color:#cecece;">Grenades</span></div><div style="left:79.50px;top:589.20px;width:6.30px;height:2.60px;background:#2ee6b4;border-radius:1.3px;"></div><div style="left:88.20px;top:585.70px;width:33.80px;height:9.00px;overflow:hidden;"><span class="t" style="left:0;top:0.2px;font-size:6.0px;line-height:8.6px;color:#cecece;">Integer</span></div><svg style="left:125.50px;top:588.00px;" width="8" height="4" viewBox="0 0 8 4"><path d="M0.5 1c1.3 2.2 4.7 2.2 6 0" fill="none" stroke="#d0d0d0" stroke-width="0.8"/><path d="M0.3 1.9l0.8-0.6M6.7 1.9l-0.8-0.6" stroke="#d0d0d0" stroke-width="0.6"/></svg></div></div>
<div style="left:3.90px;top:595.80px;width:131.00px;height:12.70px;background:#40576f;"></div>
<span class="t" style="top:598.40px;font-size:6.0px;line-height:8.4px;color:#f0f0f0;left:9.80px;">Keys</span>
<div style="left:79.50px;top:601.00px;width:6.30px;height:2.60px;background:#2ee6b4;border-radius:1.3px;"></div>
<span class="t" style="top:598.40px;font-size:6.0px;line-height:8.4px;color:#f0f0f0;left:88.20px;">Integer</span>
<svg style="left:125.50px;top:599.80px;" width="8" height="4" viewBox="0 0 8 4"><path d="M0.5 1c1.3 2.2 4.7 2.2 6 0" fill="none" stroke="#d0d0d0" stroke-width="0.8"/><path d="M0.3 1.9l0.8-0.6M6.7 1.9l-0.8-0.6" stroke="#d0d0d0" stroke-width="0.6"/></svg>
<div style="left:1.00px;top:609.30px;width:134.50px;height:12.00px;background:#2f2f2f;"></div>
<span class="t" style="top:612.79px;font-size:5.3px;line-height:7.42px;color:#d0d0d0;font-weight:700;left:9.85px;transform:scaleX(0.896);transform-origin:0 50%;">EVENT DISPATCHERS</span>
<svg style="left:123.00px;top:611.50px;" width="8" height="8" viewBox="0 0 8 8"><circle cx="4" cy="4" r="3.1" fill="none" stroke="#c8c8c8" stroke-width="0.8"/><path d="M4 2.3v3.4M2.3 4h3.4" stroke="#c8c8c8" stroke-width="0.8"/></svg>
<div style="left:141.00px;top:43.00px;width:734.00px;height:13.50px;background:#151515;"></div>
<svg style="left:145.00px;top:46.30px;" width="8" height="8" viewBox="0 0 8 8"><path d="M0.4 0.8h3v2.4h-3zM4.2 0.8h3v2.4h-3zM0.4 4h3v2.8h-3zM4.2 4h3v2.8h-3z" fill="#c0c0c0"/></svg>
<span class="t" style="top:46.40px;font-size:6.0px;line-height:8.4px;color:#c8c8c8;left:156.00px;">Viewport</span>
<span class="t" style="top:45.72px;font-size:6.4px;line-height:8.96px;color:#dcdcdc;font-weight:700;left:222.50px;font-family:'DejaVu Sans',sans-serif;font-style:italic;">ƒ</span>
<span class="t" style="top:46.40px;font-size:6.0px;line-height:8.4px;color:#c8c8c8;left:231.50px;">Construction Scr...</span>
<span class="t" style="top:45.72px;font-size:6.4px;line-height:8.96px;color:#dcdcdc;font-weight:700;left:298.50px;font-family:'DejaVu Sans',sans-serif;font-style:italic;">ƒ</span>
<span class="t" style="top:46.40px;font-size:6.0px;line-height:8.4px;color:#c8c8c8;left:307.00px;">SpawnWeapon</span>
<span class="t" style="top:45.72px;font-size:6.4px;line-height:8.96px;color:#dcdcdc;font-weight:700;left:375.00px;font-family:'DejaVu Sans',sans-serif;font-style:italic;">ƒ</span>
<span class="t" style="top:46.40px;font-size:6.0px;line-height:8.4px;color:#c8c8c8;left:383.50px;">AddWeapon</span>
<span class="t" style="top:45.72px;font-size:6.4px;line-height:8.96px;color:#dcdcdc;font-weight:700;left:451.50px;font-family:'DejaVu Sans',sans-serif;font-style:italic;">ƒ</span>
<span class="t" style="top:46.40px;font-size:6.0px;line-height:8.4px;color:#c8c8c8;left:459.70px;">EquipWeapon</span>
<div style="left:523.00px;top:44.00px;width:75.00px;height:12.50px;background:#242424;border-radius:2px 2px 0 0;"></div>
<svg style="left:526.00px;top:46.20px;" width="8" height="8" viewBox="0 0 8 8"><rect x="0.3" y="0.6" width="2.6" height="2.6" fill="#e8e8e8"/><rect x="4.6" y="0.6" width="2.6" height="2.2" fill="#e8e8e8"/><rect x="4.6" y="4.4" width="2.6" height="2.2" fill="#e8e8e8"/><path d="M2.9 2l1.7-0.2M2.6 3l2 2.4" stroke="#e8e8e8" stroke-width="0.7"/></svg>
<span class="t" style="top:46.40px;font-size:6.0px;line-height:8.4px;color:#f0f0f0;left:536.00px;">Event Graph</span>
<span class="t" style="top:45.35px;font-size:7.5px;line-height:10.5px;color:#d0d0d0;left:589.50px;transform:translateX(-50%);">×</span>
<div style="left:143.00px;top:56.00px;width:732.50px;height:449.00px;overflow:hidden;background-color:#252525;background-image:linear-gradient(90deg,#141414 0,#141414 1px,transparent 1px),linear-gradient(#141414 0,#141414 1px,transparent 1px),linear-gradient(90deg,rgba(255,255,255,.028) 0,rgba(255,255,255,.028) 1px,transparent 1px),linear-gradient(rgba(255,255,255,.028) 0,rgba(255,255,255,.028) 1px,transparent 1px);background-size:40.58px 40.58px,40.58px 40.58px,5.0725px 5.0725px,5.0725px 5.0725px;background-position:9.8px 29.7px,9.8px 29.7px,9.8px 29.7px,9.8px 29.7px;"><div style="left:-143px;top:-56px;width:1023px;height:640px;"><div style="left:234.00px;top:40.00px;width:593.40px;height:37.00px;background:linear-gradient(rgba(150,150,150,.56) 0,rgba(150,150,150,.56) 34.5px,rgba(190,190,190,.6) 37px);"></div><svg style="left:822.00px;top:71.70px;" width="5" height="5" viewBox="0 0 5 5"><path d="M4.6 0.4v4.2h-4.2z" fill="#e0e0e0"/></svg><div style="left:234.00px;top:87.50px;width:441.30px;height:136.70px;background:rgba(150,150,150,.56);box-shadow:0 0 0 0.7px rgba(150,150,150,.3);"></div><div style="left:234.00px;top:87.50px;width:441.30px;height:13.00px;background:#a8a8a8;"></div><span class="t" style="top:88.77px;font-size:7.9px;line-height:11.06px;color:#f6f6f6;left:237.80px;transform:scaleX(0.834);transform-origin:0 50%;text-shadow:0.7px 0.7px 0.3px #1c1c1c,0 0 1.5px #404040;">Begin Play</span><svg style="left:669.80px;top:218.70px;" width="5" height="5" viewBox="0 0 5 5"><path d="M4.6 0.4v4.2h-4.2z" fill="#e0e0e0"/></svg><div style="left:209.20px;top:250.00px;width:186.80px;height:120.50px;background:rgba(150,150,150,.56);box-shadow:0 0 0 0.7px rgba(150,150,150,.3);"></div><div style="left:209.20px;top:250.00px;width:186.80px;height:12.00px;background:#a8a8a8;"></div><span class="t" style="top:250.77px;font-size:7.9px;line-height:11.06px;color:#f6f6f6;left:213.00px;transform:scaleX(0.875);transform-origin:0 50%;text-shadow:0.7px 0.7px 0.3px #1c1c1c,0 0 1.5px #404040;">WASD</span><svg style="left:390.50px;top:365.00px;" width="5" height="5" viewBox="0 0 5 5"><path d="M4.6 0.4v4.2h-4.2z" fill="#e0e0e0"/></svg><div style="left:209.20px;top:376.40px;width:186.80px;height:140.00px;background:rgba(150,150,150,.56);box-shadow:0 0 0 0.7px rgba(150,150,150,.3);"></div><div style="left:209.20px;top:376.40px;width:186.80px;height:12.60px;background:#a8a8a8;"></div><span class="t" style="top:377.47px;font-size:7.9px;line-height:11.06px;color:#f6f6f6;left:213.00px;transform:scaleX(0.955);transform-origin:0 50%;text-shadow:0.7px 0.7px 0.3px #1c1c1c,0 0 1.5px #404040;">Jump &amp; Crouch</span><svg style="left:390.50px;top:510.90px;" width="5" height="5" viewBox="0 0 5 5"><path d="M4.6 0.4v4.2h-4.2z" fill="#e0e0e0"/></svg><div style="left:478.00px;top:230.00px;width:364.00px;height:236.90px;background:rgba(150,150,150,.56);box-shadow:0 0 0 0.7px rgba(150,150,150,.3);"></div><div style="left:478.00px;top:230.00px;width:364.00px;height:12.00px;background:#a8a8a8;"></div><span class="t" style="top:230.77px;font-size:7.9px;line-height:11.06px;color:#f6f6f6;left:481.80px;transform:scaleX(0.939);transform-origin:0 50%;text-shadow:0.7px 0.7px 0.3px #1c1c1c,0 0 1.5px #404040;">Weapon</span><svg style="left:836.50px;top:461.40px;" width="5" height="5" viewBox="0 0 5 5"><path d="M4.6 0.4v4.2h-4.2z" fill="#e0e0e0"/></svg><div style="left:478.00px;top:493.10px;width:397.00px;height:30.00px;background:rgba(150,150,150,.56);box-shadow:0 0 0 0.7px rgba(150,150,150,.3);"></div><div style="left:478.00px;top:493.10px;width:397.00px;height:12.00px;background:linear-gradient(#9c9c9c,#8a8a8a);"></div><span class="t" style="top:493.87px;font-size:7.9px;line-height:11.06px;color:#f6f6f6;left:481.80px;transform:scaleX(0.920);transform-origin:0 50%;text-shadow:0.7px 0.7px 0.3px #1c1c1c,0 0 1.5px #404040;">Health</span><svg style="left:869.50px;top:517.60px;" width="5" height="5" viewBox="0 0 5 5"><path d="M4.6 0.4v4.2h-4.2z" fill="#e0e0e0"/></svg><svg style="left:0;top:0;" width="1023" height="640" viewBox="0 0 1023 640"><path d="M301.5 136.6H330" fill="none" stroke="#f2f2f2" stroke-width="1.15"/><path d="M364.5 136.6C396 136.6 407 112 412.5 50" fill="none" stroke="#f2f2f2" stroke-width="1.15"/><path d="M364.5 146.2C383 146.2 385 161.7 406 161.7" fill="none" stroke="#f2f2f2" stroke-width="1.15"/><path d="M447.5 161.7H482" fill="none" stroke="#f2f2f2" stroke-width="1.15"/><path d="M529.8 161.7H583" fill="none" stroke="#f2f2f2" stroke-width="1.15"/><path d="M300.6 288.4H325" fill="none" stroke="#f2f2f2" stroke-width="1.15"/><path d="M311.7 415.5H335.2" fill="none" stroke="#f2f2f2" stroke-width="1.15"/><path d="M588 268H603.8" fill="none" stroke="#f2f2f2" stroke-width="1.15"/><path d="M770.8 273.2H791.5" fill="none" stroke="#f2f2f2" stroke-width="1.15"/><path d="M582 374.6H603.8" fill="none" stroke="#f2f2f2" stroke-width="1.15"/><path d="M582 384.5H603.8" fill="none" stroke="#f2f2f2" stroke-width="1.15"/><path d="M526 184.4C540 184.4 538 178.6 520 178.6C500 178.6 470 173 482 171.2" fill="none" stroke="#9c1010" stroke-width="0.6"/><path d="M628 199.4C640 199.4 640 197.5 630 195.5L590 186.5C574 183 574 182.7 583 182.7" fill="none" stroke="#5a16c8" stroke-width="0.6"/></svg><div style="left:254.80px;top:122.60px;width:51.00px;height:19.50px;background:linear-gradient(#202020,#151515);border-radius:2.4px;box-shadow:0 0 0 0.5px #050505,0 1px 1.5px rgba(0,0,0,.6);overflow:hidden;"><div style="left:0;top:0;width:100%;height:7.40px;background:linear-gradient(100deg,#a01212 0%,#a01212 45%,#3a0a0a 100%);"></div><div style="left:0;top:0;width:100%;height:3.70px;background:linear-gradient(rgba(255,255,255,.2),rgba(255,255,255,.04));"></div></div><svg style="left:257.30px;top:124.00px;" width="4.6" height="4.6" viewBox="0 0 4.6 4.6"><path d="M2.85 0.55L0.83 2.30L2.85 4.05" fill="none" stroke="#fff" stroke-width="0.9"/><path d="M2.30 2.30h2.07" stroke="#fff" stroke-width="0.9"/></svg><span class="t" style="top:124.25px;font-size:3.93px;line-height:5.5px;color:#f4f4f4;font-weight:700;left:264.00px;">Event BeginPlay</span><div style="left:300.60px;top:125.00px;width:2.40px;height:2.40px;background:#d01010;border-radius:50%;box-shadow:0 0 0 0.5px #500;"></div><svg style="left:297.80px;top:134.15px;" width="4.4" height="4.9" viewBox="0 0 4.4 4.9"><path d="M0.5 0.5h1.5l1.8 1.95-1.8 1.95h-1.5z" fill="#ffffff" stroke="#ffffff" stroke-width="0.5" stroke-linejoin="round"/></svg><div style="left:326.00px;top:122.60px;width:42.80px;height:39.20px;background:linear-gradient(#202020,#151515);border-radius:2.4px;box-shadow:0 0 0 0.5px #050505,0 1px 1.5px rgba(0,0,0,.6);overflow:hidden;"><div style="left:0;top:0;width:100%;height:7.40px;background:linear-gradient(100deg,#8a8a8a 0%,#8a8a8a 45%,#2a2a2a 100%);"></div><div style="left:0;top:0;width:100%;height:3.70px;background:linear-gradient(rgba(255,255,255,.2),rgba(255,255,255,.04));"></div></div><svg style="left:328.60px;top:124.20px;" width="5" height="4.6" viewBox="0 0 5 4.6"><path d="M0.3 2.3h1.6M1.9 0.7v3.2M1.9 0.7h2.6M1.9 2.3h2.6M1.9 3.9h2.6" stroke="#fff" stroke-width="0.7" fill="none"/></svg><span class="t" style="top:124.25px;font-size:3.92px;line-height:5.49px;color:#dadada;font-weight:700;left:335.00px;">Sequence</span><svg style="left:329.60px;top:134.15px;" width="4.4" height="4.9" viewBox="0 0 4.4 4.9"><path d="M0.5 0.5h1.5l1.8 1.95-1.8 1.95h-1.5z" fill="#ffffff" stroke="#ffffff" stroke-width="0.5" stroke-linejoin="round"/></svg><span class="t" style="top:134.70px;font-size:3.57px;line-height:5.0px;color:#dcdcdc;font-weight:700;right:664.00px;">Then 0</span><svg style="left:360.60px;top:134.15px;" width="4.4" height="4.9" viewBox="0 0 4.4 4.9"><path d="M0.5 0.5h1.5l1.8 1.95-1.8 1.95h-1.5z" fill="#ffffff" stroke="#ffffff" stroke-width="0.5" stroke-linejoin="round"/></svg><span class="t" style="top:144.30px;font-size:3.57px;line-height:5.0px;color:#dcdcdc;font-weight:700;right:664.00px;">Then 1</span><svg style="left:360.60px;top:143.75px;" width="4.4" height="4.9" viewBox="0 0 4.4 4.9"><path d="M0.5 0.5h1.5l1.8 1.95-1.8 1.95h-1.5z" fill="#ffffff" stroke="#ffffff" stroke-width="0.5" stroke-linejoin="round"/></svg><span class="t" style="top:155.84px;font-size:4.22px;line-height:5.91px;color:#dcdcdc;font-weight:400;right:664.40px;">Add pin</span><svg style="left:361.00px;top:155.90px;" width="5" height="5" viewBox="0 0 5 5"><circle cx="2.4" cy="2.4" r="1.9" fill="none" stroke="#e0e0e0" stroke-width="0.6"/><path d="M2.4 1.3v2.2M1.3 2.4h2.2" stroke="#e0e0e0" stroke-width="0.6"/></svg><div style="left:401.90px;top:143.00px;width:50.00px;height:24.60px;background:linear-gradient(#222222,#161616);border-radius:2.4px;box-shadow:0 0 0 0.5px #050505,0 1px 1.5px rgba(0,0,0,.6);overflow:hidden;"><div style="left:12%;top:34%;width:76%;height:60%;border-radius:40%;background:radial-gradient(ellipse at center,rgba(120,120,120,.62) 0%,rgba(90,90,90,.35) 45%,rgba(40,40,40,0) 75%);"></div></div><span class="t" style="top:144.57px;font-size:4.04px;line-height:5.66px;color:#e8e8e8;font-weight:700;left:405.00px;">SetDefaultVariables</span><span class="t" style="top:150.69px;font-size:3.73px;line-height:5.22px;color:#8c9060;font-weight:400;left:405.00px;font-style:italic;">Collapsed Graph</span><svg style="left:405.80px;top:159.25px;" width="4.4" height="4.9" viewBox="0 0 4.4 4.9"><path d="M0.5 0.5h1.5l1.8 1.95-1.8 1.95h-1.5z" fill="#ffffff" stroke="#ffffff" stroke-width="0.5" stroke-linejoin="round"/></svg><svg style="left:443.60px;top:159.25px;" width="4.4" height="4.9" viewBox="0 0 4.4 4.9"><path d="M0.5 0.5h1.5l1.8 1.95-1.8 1.95h-1.5z" fill="#ffffff" stroke="#ffffff" stroke-width="0.5" stroke-linejoin="round"/></svg><div style="left:478.10px;top:148.20px;width:56.20px;height:29.30px;background:linear-gradient(#202020,#151515);border-radius:2.4px;box-shadow:0 0 0 0.5px #050505,0 1px 1.5px rgba(0,0,0,.6);overflow:hidden;"><div style="left:0;top:0;width:100%;height:6.80px;background:linear-gradient(100deg,#8a8a8a 0%,#8a8a8a 45%,#2a2a2a 100%);"></div><div style="left:0;top:0;width:100%;height:3.40px;background:linear-gradient(rgba(255,255,255,.2),rgba(255,255,255,.04));"></div></div><svg style="left:480.60px;top:149.40px;" width="5" height="4.6" viewBox="0 0 5 4.6"><path d="M4.4 0.8h-2.4l-1.4 1.5 1.4 1.5h2.4" stroke="#fff" stroke-width="0.8" fill="none"/></svg><span class="t" style="top:149.53px;font-size:3.95px;line-height:5.53px;color:#dadada;font-weight:700;left:487.00px;">Branch</span><svg style="left:481.60px;top:159.25px;" width="4.4" height="4.9" viewBox="0 0 4.4 4.9"><path d="M0.5 0.5h1.5l1.8 1.95-1.8 1.95h-1.5z" fill="#ffffff" stroke="#ffffff" stroke-width="0.5" stroke-linejoin="round"/></svg><span class="t" style="top:159.48px;font-size:4.02px;line-height:5.63px;color:#dcdcdc;font-weight:700;right:497.80px;">True</span><svg style="left:525.80px;top:159.25px;" width="4.4" height="4.9" viewBox="0 0 4.4 4.9"><path d="M0.5 0.5h1.5l1.8 1.95-1.8 1.95h-1.5z" fill="#ffffff" stroke="#ffffff" stroke-width="0.5" stroke-linejoin="round"/></svg><span class="t" style="top:169.38px;font-size:3.6px;line-height:5.04px;color:#dcdcdc;font-weight:700;right:497.80px;">False</span><svg style="left:525.80px;top:168.85px;" width="4.4" height="4.9" viewBox="0 0 4.4 4.9"><path d="M0.5 0.5h1.5l1.8 1.95-1.8 1.95h-1.5z" fill="none" stroke="#d8d8d8" stroke-width="0.5" stroke-linejoin="round"/></svg><div style="left:481.90px;top:169.40px;width:3.70px;height:3.70px;background:#c40c0c;border-radius:50%;"></div><span class="t" style="top:169.37px;font-size:3.62px;line-height:5.07px;color:#c8c8c8;font-weight:700;left:488.80px;">Condition</span><div style="left:478.60px;top:179.00px;width:52.80px;height:10.50px;background:linear-gradient(#8a5a5a 0%,#6a6a6a 18%,#4a4a4a 50%,#333 100%);border-radius:4.2px;box-shadow:0 0 0 0.5px #111,0 1px 1.5px rgba(0,0,0,.6);"></div><span class="t" style="top:182.51px;font-size:3.63px;line-height:5.08px;color:#ececec;font-weight:700;left:484.00px;">Use Starting Weapon</span><div style="left:522.00px;top:182.80px;width:3.40px;height:3.40px;background:#c40c0c;border-radius:50%;"></div><div style="left:579.40px;top:142.50px;width:67.10px;height:45.30px;background:linear-gradient(#202020,#151515);border-radius:2.4px;box-shadow:0 0 0 0.5px #050505,0 1px 1.5px rgba(0,0,0,.6);overflow:hidden;"><div style="left:0;top:0;width:100%;height:13.50px;background:linear-gradient(100deg,#40709a 0%,#40709a 45%,#1a2e3e 100%);"></div><div style="left:0;top:0;width:100%;height:6.75px;background:linear-gradient(rgba(255,255,255,.2),rgba(255,255,255,.04));"></div></div><svg style="left:582.30px;top:144.60px;" width="4.8" height="4.8" viewBox="0 0 4.8 4.8"><circle cx="2.4" cy="2.4" r="1.7" fill="none" stroke="#fff" stroke-width="0.8"/><path d="M0.2 2.4h2.2" stroke="#fff" stroke-width="0.8"/></svg><span class="t" style="top:144.72px;font-size:3.97px;line-height:5.56px;color:#f4f4f4;font-weight:700;left:588.75px;">Spawn Weapon</span><span class="t" style="top:150.50px;font-size:3.71px;line-height:5.19px;color:#8d9482;font-weight:400;left:588.75px;font-style:italic;">Target is BP Character Base</span><svg style="left:582.80px;top:159.45px;" width="4.4" height="4.9" viewBox="0 0 4.4 4.9"><path d="M0.5 0.5h1.5l1.8 1.95-1.8 1.95h-1.5z" fill="#ffffff" stroke="#ffffff" stroke-width="0.5" stroke-linejoin="round"/></svg><svg style="left:637.80px;top:159.45px;" width="4.4" height="4.9" viewBox="0 0 4.4 4.9"><path d="M0.5 0.5h1.5l1.8 1.95-1.8 1.95h-1.5z" fill="none" stroke="#d8d8d8" stroke-width="0.5" stroke-linejoin="round"/></svg><svg style="left:582.70px;top:170.20px;" width="5.4" height="4.6" viewBox="0 0 5.4 4.6"><circle cx="2.1" cy="2.3" r="1.45" fill="none" stroke="#129ae0" stroke-width="0.7"/><path d="M4 1.5l0.9 0.8-0.9 0.8z" fill="#129ae0"/></svg><span class="t" style="top:170.61px;font-size:3.55px;line-height:4.97px;color:#dcdcdc;font-weight:700;left:590.00px;">Target</span><div style="left:602.25px;top:169.40px;width:13.40px;height:6.20px;background:#111;border:0.6px solid #aaa;box-sizing:border-box;border-radius:1px;"></div><span class="t" style="top:170.22px;font-size:4.11px;line-height:5.75px;color:#d0d0d0;font-weight:400;left:604.60px;">self</span><div style="left:583.30px;top:180.80px;width:3.90px;height:3.90px;background:#5a16c8;border-radius:50%;"></div><span class="t" style="top:180.99px;font-size:3.37px;line-height:4.72px;color:#dcdcdc;font-weight:700;left:590.00px;">Class</span><div style="left:579.40px;top:193.75px;width:54.40px;height:11.20px;background:linear-gradient(#7a58b8 0%,#6a6a6a 18%,#4a4a4a 50%,#333 100%);border-radius:4.2px;box-shadow:0 0 0 0.5px #111,0 1px 1.5px rgba(0,0,0,.6);"></div><span class="t" style="top:197.66px;font-size:3.55px;line-height:4.97px;color:#ececec;font-weight:700;left:585.00px;">Default Weapon Class</span><div style="left:624.30px;top:197.70px;width:3.40px;height:3.40px;background:#5a16c8;border-radius:50%;"></div><svg style="left:630.50px;top:189.50px;" width="7" height="6" viewBox="0 0 7 6"><path d="M1 1.2l2.2-0.8 3 2.6-1.8 2.2-2-0.4z" fill="#f4f4f4" stroke="#888" stroke-width="0.4"/></svg><div style="left:264.60px;top:274.65px;width:40.20px;height:28.85px;background:linear-gradient(#202020,#151515);border-radius:2.4px;box-shadow:0 0 0 0.5px #050505,0 1px 1.5px rgba(0,0,0,.6);overflow:hidden;"><div style="left:0;top:0;width:100%;height:7.80px;background:linear-gradient(100deg,#a01212 0%,#a01212 45%,#3a0a0a 100%);"></div><div style="left:0;top:0;width:100%;height:3.90px;background:linear-gradient(rgba(255,255,255,.2),rgba(255,255,255,.04));"></div></div><svg style="left:267.60px;top:276.10px;" width="5" height="5" viewBox="0 0 5 5"><path d="M3.10 0.60L0.90 2.50L3.10 4.40" fill="none" stroke="#fff" stroke-width="0.9"/><path d="M2.50 2.50h2.25" stroke="#fff" stroke-width="0.9"/></svg><span class="t" style="top:276.52px;font-size:3.97px;line-height:5.56px;color:#f4f4f4;font-weight:700;left:274.20px;">Event Tick</span><div style="left:299.80px;top:277.30px;width:2.50px;height:2.50px;background:#d01010;border-radius:50%;box-shadow:0 0 0 0.5px #500;"></div><svg style="left:296.80px;top:285.95px;" width="4.4" height="4.9" viewBox="0 0 4.4 4.9"><path d="M0.5 0.5h1.5l1.8 1.95-1.8 1.95h-1.5z" fill="#ffffff" stroke="#ffffff" stroke-width="0.5" stroke-linejoin="round"/></svg><span class="t" style="top:296.13px;font-size:3.53px;line-height:4.94px;color:#dcdcdc;font-weight:700;right:729.00px;">Delta Seconds</span><svg style="left:295.90px;top:295.70px;" width="5.4" height="4.6" viewBox="0 0 5.4 4.6"><circle cx="2.1" cy="2.3" r="1.45" fill="none" stroke="#2ec81e" stroke-width="0.7"/><path d="M4 1.5l0.9 0.8-0.9 0.8z" fill="#2ec81e"/></svg><div style="left:320.20px;top:269.60px;width:55.70px;height:24.70px;background:linear-gradient(#222222,#161616);border-radius:2.4px;box-shadow:0 0 0 0.5px #050505,0 1px 1.5px rgba(0,0,0,.6);overflow:hidden;"><div style="left:12%;top:34%;width:76%;height:60%;border-radius:40%;background:radial-gradient(ellipse at center,rgba(120,120,120,.62) 0%,rgba(90,90,90,.35) 45%,rgba(40,40,40,0) 75%);"></div></div><span class="t" style="top:271.44px;font-size:3.95px;line-height:5.53px;color:#e8e8e8;font-weight:700;left:323.75px;">MouseControlRotation</span><span class="t" style="top:277.69px;font-size:3.73px;line-height:5.22px;color:#8c9060;font-weight:400;left:323.75px;font-style:italic;">Collapsed Graph</span><svg style="left:324.80px;top:285.95px;" width="4.4" height="4.9" viewBox="0 0 4.4 4.9"><path d="M0.5 0.5h1.5l1.8 1.95-1.8 1.95h-1.5z" fill="#ffffff" stroke="#ffffff" stroke-width="0.5" stroke-linejoin="round"/></svg><div style="left:264.60px;top:315.40px;width:40.40px;height:28.40px;background:linear-gradient(#222222,#161616);border-radius:2.4px;box-shadow:0 0 0 0.5px #050505,0 1px 1.5px rgba(0,0,0,.6);overflow:hidden;"><div style="left:12%;top:34%;width:76%;height:60%;border-radius:40%;background:radial-gradient(ellipse at center,rgba(120,120,120,.62) 0%,rgba(90,90,90,.35) 45%,rgba(40,40,40,0) 75%);"></div></div><span class="t" style="top:317.37px;font-size:4.04px;line-height:5.66px;color:#e8e8e8;font-weight:700;left:268.00px;">Movement</span><span class="t" style="top:323.41px;font-size:3.7px;line-height:5.18px;color:#8c9060;font-weight:400;left:268.00px;font-style:italic;">Collapsed Graph</span><div style="left:219.40px;top:401.40px;width:96.10px;height:43.70px;background:linear-gradient(#202020,#151515);border-radius:2.4px;box-shadow:0 0 0 0.5px #050505,0 1px 1.5px rgba(0,0,0,.6);overflow:hidden;"><div style="left:0;top:0;width:100%;height:7.60px;background:linear-gradient(100deg,#a01212 0%,#a01212 45%,#3a0a0a 100%);"></div><div style="left:0;top:0;width:100%;height:3.80px;background:linear-gradient(rgba(255,255,255,.2),rgba(255,255,255,.04));"></div></div><svg style="left:222.00px;top:403.20px;" width="4.6" height="4.6" viewBox="0 0 4.6 4.6"><path d="M2.85 0.55L0.83 2.30L2.85 4.05" fill="none" stroke="#fff" stroke-width="0.9"/><path d="M2.30 2.30h2.07" stroke="#fff" stroke-width="0.9"/></svg><span class="t" style="top:403.34px;font-size:3.95px;line-height:5.53px;color:#f4f4f4;font-weight:700;left:228.20px;">EnhancedInputAction InputAction_Jump</span><span class="t" style="top:413.58px;font-size:3.6px;line-height:5.04px;color:#dcdcdc;font-weight:700;right:717.30px;">Triggered</span><svg style="left:307.60px;top:413.05px;" width="4.4" height="4.9" viewBox="0 0 4.4 4.9"><path d="M0.5 0.5h1.5l1.8 1.95-1.8 1.95h-1.5z" fill="#ffffff" stroke="#ffffff" stroke-width="0.5" stroke-linejoin="round"/></svg><span class="t" style="top:422.78px;font-size:3.75px;line-height:5.25px;color:#dcdcdc;font-weight:700;right:717.30px;">Action Value</span><svg style="left:307.50px;top:422.50px;" width="5.4" height="4.6" viewBox="0 0 5.4 4.6"><circle cx="2.1" cy="2.3" r="1.45" fill="none" stroke="#8c0a0a" stroke-width="0.7"/><path d="M4 1.5l0.9 0.8-0.9 0.8z" fill="#8c0a0a"/></svg><span class="t" style="top:431.94px;font-size:3.8px;line-height:5.32px;color:#dcdcdc;font-weight:700;right:717.30px;">Input Action</span><svg style="left:307.50px;top:431.70px;" width="5.4" height="4.6" viewBox="0 0 5.4 4.6"><circle cx="2.1" cy="2.3" r="1.45" fill="none" stroke="#129ae0" stroke-width="0.7"/><path d="M4 1.5l0.9 0.8-0.9 0.8z" fill="#129ae0"/></svg><svg style="left:266.00px;top:441.10px;" width="4" height="2.6" viewBox="0 0 4 2.6"><path d="M0.5 0.5l1.5 1.4 1.5-1.4" fill="none" stroke="#e0e0e0" stroke-width="0.8"/></svg><div style="left:331.30px;top:396.70px;width:54.00px;height:35.50px;background:linear-gradient(#202020,#151515);border-radius:2.4px;box-shadow:0 0 0 0.5px #050505,0 1px 1.5px rgba(0,0,0,.6);overflow:hidden;"><div style="left:0;top:0;width:100%;height:12.70px;background:linear-gradient(100deg,#40709a 0%,#40709a 45%,#1a2e3e 100%);"></div><div style="left:0;top:0;width:100%;height:6.35px;background:linear-gradient(rgba(255,255,255,.2),rgba(255,255,255,.04));"></div></div><span class="t" style="top:397.15px;font-size:5.5px;line-height:7.7px;color:#9fd0ff;left:335.40px;font-family:'Liberation Serif',serif;"><i>f</i></span><span class="t" style="top:398.62px;font-size:3.82px;line-height:5.35px;color:#f4f4f4;font-weight:700;left:340.80px;">Jump</span><span class="t" style="top:404.71px;font-size:3.7px;line-height:5.18px;color:#8d9482;font-weight:400;left:340.80px;font-style:italic;">Target is Character</span><svg style="left:335.00px;top:413.05px;" width="4.4" height="4.9" viewBox="0 0 4.4 4.9"><path d="M0.5 0.5h1.5l1.8 1.95-1.8 1.95h-1.5z" fill="#ffffff" stroke="#ffffff" stroke-width="0.5" stroke-linejoin="round"/></svg><svg style="left:377.20px;top:413.05px;" width="4.4" height="4.9" viewBox="0 0 4.4 4.9"><path d="M0.5 0.5h1.5l1.8 1.95-1.8 1.95h-1.5z" fill="none" stroke="#d8d8d8" stroke-width="0.5" stroke-linejoin="round"/></svg><svg style="left:334.90px;top:424.10px;" width="5.4" height="4.6" viewBox="0 0 5.4 4.6"><circle cx="2.1" cy="2.3" r="1.45" fill="none" stroke="#129ae0" stroke-width="0.7"/><path d="M4 1.5l0.9 0.8-0.9 0.8z" fill="#129ae0"/></svg><span class="t" style="top:424.49px;font-size:3.59px;line-height:5.03px;color:#dcdcdc;font-weight:700;left:341.70px;">Target</span><div style="left:354.20px;top:423.40px;width:12.60px;height:5.80px;background:#111;border:0.6px solid #aaa;box-sizing:border-box;border-radius:1px;"></div><span class="t" style="top:424.30px;font-size:3.86px;line-height:5.4px;color:#d0d0d0;font-weight:400;left:356.40px;">self</span><div style="left:219.40px;top:493.10px;width:99.10px;height:43.70px;background:linear-gradient(#202020,#151515);border-radius:2.4px;box-shadow:0 0 0 0.5px #050505,0 1px 1.5px rgba(0,0,0,.6);overflow:hidden;"><div style="left:0;top:0;width:100%;height:7.60px;background:linear-gradient(100deg,#a01212 0%,#a01212 45%,#3a0a0a 100%);"></div><div style="left:0;top:0;width:100%;height:3.80px;background:linear-gradient(rgba(255,255,255,.2),rgba(255,255,255,.04));"></div></div><svg style="left:222.00px;top:494.60px;" width="4.6" height="4.6" viewBox="0 0 4.6 4.6"><path d="M2.85 0.55L0.83 2.30L2.85 4.05" fill="none" stroke="#fff" stroke-width="0.9"/><path d="M2.30 2.30h2.07" stroke="#fff" stroke-width="0.9"/></svg><span class="t" style="top:494.74px;font-size:3.95px;line-height:5.53px;color:#f4f4f4;font-weight:700;left:228.20px;">EnhancedInputAction InputAction_Crouch</span><svg style="left:-2.00px;top:-1.20px;" width="4" height="2.6" viewBox="0 0 4 2.6"><path d="M0.5 0.5l1.5 1.4 1.5-1.4" fill="none" stroke="#e0e0e0" stroke-width="0.8"/></svg><div style="left:325.90px;top:497.70px;width:54.70px;height:35.50px;background:linear-gradient(#202020,#151515);border-radius:2.4px;box-shadow:0 0 0 0.5px #050505,0 1px 1.5px rgba(0,0,0,.6);overflow:hidden;"><div style="left:0;top:0;width:100%;height:12.70px;background:linear-gradient(100deg,#40709a 0%,#40709a 45%,#1a2e3e 100%);"></div><div style="left:0;top:0;width:100%;height:6.35px;background:linear-gradient(rgba(255,255,255,.2),rgba(255,255,255,.04));"></div></div><span class="t" style="top:498.35px;font-size:5.5px;line-height:7.7px;color:#9fd0ff;left:330.50px;font-family:'Liberation Serif',serif;"><i>f</i></span><span class="t" style="top:499.80px;font-size:3.86px;line-height:5.4px;color:#f4f4f4;font-weight:700;left:335.50px;">Crouch</span><div style="left:493.00px;top:254.60px;width:98.80px;height:43.90px;background:linear-gradient(#202020,#151515);border-radius:2.4px;box-shadow:0 0 0 0.5px #050505,0 1px 1.5px rgba(0,0,0,.6);overflow:hidden;"><div style="left:0;top:0;width:100%;height:7.00px;background:linear-gradient(100deg,#a01212 0%,#a01212 45%,#3a0a0a 100%);"></div><div style="left:0;top:0;width:100%;height:3.50px;background:linear-gradient(rgba(255,255,255,.2),rgba(255,255,255,.04));"></div></div><svg style="left:495.60px;top:256.00px;" width="4.6" height="4.6" viewBox="0 0 4.6 4.6"><path d="M2.85 0.55L0.83 2.30L2.85 4.05" fill="none" stroke="#fff" stroke-width="0.9"/><path d="M2.30 2.30h2.07" stroke="#fff" stroke-width="0.9"/></svg><span class="t" style="top:256.14px;font-size:3.94px;line-height:5.52px;color:#f4f4f4;font-weight:700;left:502.40px;">EnhancedInputAction InputAction_Reload</span><span class="t" style="top:266.10px;font-size:3.58px;line-height:5.01px;color:#dcdcdc;font-weight:700;right:441.00px;">Triggered</span><svg style="left:583.90px;top:265.55px;" width="4.4" height="4.9" viewBox="0 0 4.4 4.9"><path d="M0.5 0.5h1.5l1.8 1.95-1.8 1.95h-1.5z" fill="#ffffff" stroke="#ffffff" stroke-width="0.5" stroke-linejoin="round"/></svg><span class="t" style="top:275.73px;font-size:3.68px;line-height:5.15px;color:#dcdcdc;font-weight:700;right:441.00px;">Action Value</span><svg style="left:583.80px;top:275.40px;" width="5.4" height="4.6" viewBox="0 0 5.4 4.6"><circle cx="2.1" cy="2.3" r="1.45" fill="none" stroke="#8c0a0a" stroke-width="0.7"/><path d="M4 1.5l0.9 0.8-0.9 0.8z" fill="#8c0a0a"/></svg><span class="t" style="top:284.97px;font-size:3.76px;line-height:5.26px;color:#dcdcdc;font-weight:700;right:441.00px;">Input Action</span><svg style="left:583.80px;top:284.70px;" width="5.4" height="4.6" viewBox="0 0 5.4 4.6"><circle cx="2.1" cy="2.3" r="1.45" fill="none" stroke="#129ae0" stroke-width="0.7"/><path d="M4 1.5l0.9 0.8-0.9 0.8z" fill="#129ae0"/></svg><svg style="left:540.70px;top:293.70px;" width="4" height="2.6" viewBox="0 0 4 2.6"><path d="M0.5 0.5l1.5 1.4 1.5-1.4" fill="none" stroke="#e0e0e0" stroke-width="0.8"/></svg><div style="left:599.70px;top:249.20px;width:41.00px;height:24.80px;background:linear-gradient(#222222,#161616);border-radius:2.4px;box-shadow:0 0 0 0.5px #050505,0 1px 1.5px rgba(0,0,0,.6);overflow:hidden;"><div style="left:12%;top:34%;width:76%;height:60%;border-radius:40%;background:radial-gradient(ellipse at center,rgba(120,120,120,.62) 0%,rgba(90,90,90,.35) 45%,rgba(40,40,40,0) 75%);"></div></div><span class="t" style="top:251.22px;font-size:3.97px;line-height:5.56px;color:#e8e8e8;font-weight:700;left:602.60px;">ReloadWeapon</span><span class="t" style="top:256.86px;font-size:3.78px;line-height:5.29px;color:#8c9060;font-weight:400;left:602.60px;font-style:italic;">Collapsed Graph</span><svg style="left:603.60px;top:265.55px;" width="4.4" height="4.9" viewBox="0 0 4.4 4.9"><path d="M0.5 0.5h1.5l1.8 1.95-1.8 1.95h-1.5z" fill="#ffffff" stroke="#ffffff" stroke-width="0.5" stroke-linejoin="round"/></svg><div style="left:660.60px;top:259.50px;width:115.10px;height:44.50px;background:linear-gradient(#202020,#151515);border-radius:2.4px;box-shadow:0 0 0 0.5px #050505,0 1px 1.5px rgba(0,0,0,.6);overflow:hidden;"><div style="left:0;top:0;width:100%;height:7.80px;background:linear-gradient(100deg,#a01212 0%,#a01212 45%,#3a0a0a 100%);"></div><div style="left:0;top:0;width:100%;height:3.90px;background:linear-gradient(rgba(255,255,255,.2),rgba(255,255,255,.04));"></div></div><svg style="left:663.20px;top:261.30px;" width="4.6" height="4.6" viewBox="0 0 4.6 4.6"><path d="M2.85 0.55L0.83 2.30L2.85 4.05" fill="none" stroke="#fff" stroke-width="0.9"/><path d="M2.30 2.30h2.07" stroke="#fff" stroke-width="0.9"/></svg><span class="t" style="top:261.41px;font-size:3.99px;line-height:5.59px;color:#f4f4f4;font-weight:700;left:669.50px;">EnhancedInputAction InputAction_WeaponSwitch</span><span class="t" style="top:271.36px;font-size:3.49px;line-height:4.89px;color:#dcdcdc;font-weight:700;right:257.10px;">Triggered</span><svg style="left:767.80px;top:270.75px;" width="4.4" height="4.9" viewBox="0 0 4.4 4.9"><path d="M0.5 0.5h1.5l1.8 1.95-1.8 1.95h-1.5z" fill="#ffffff" stroke="#ffffff" stroke-width="0.5" stroke-linejoin="round"/></svg><span class="t" style="top:280.91px;font-size:3.7px;line-height:5.18px;color:#dcdcdc;font-weight:700;right:257.10px;">Action Value</span><svg style="left:767.70px;top:280.60px;" width="5.4" height="4.6" viewBox="0 0 5.4 4.6"><circle cx="2.1" cy="2.3" r="1.45" fill="none" stroke="#8c0a0a" stroke-width="0.7"/><path d="M4 1.5l0.9 0.8-0.9 0.8z" fill="#8c0a0a"/></svg><span class="t" style="top:290.34px;font-size:3.8px;line-height:5.32px;color:#dcdcdc;font-weight:700;right:257.10px;">Input Action</span><svg style="left:767.70px;top:290.10px;" width="5.4" height="4.6" viewBox="0 0 5.4 4.6"><circle cx="2.1" cy="2.3" r="1.45" fill="none" stroke="#129ae0" stroke-width="0.7"/><path d="M4 1.5l0.9 0.8-0.9 0.8z" fill="#129ae0"/></svg><svg style="left:715.80px;top:299.00px;" width="4" height="2.6" viewBox="0 0 4 2.6"><path d="M0.5 0.5l1.5 1.4 1.5-1.4" fill="none" stroke="#e0e0e0" stroke-width="0.8"/></svg><div style="left:787.20px;top:253.90px;width:41.50px;height:25.50px;background:linear-gradient(#222222,#161616);border-radius:2.4px;box-shadow:0 0 0 0.5px #050505,0 1px 1.5px rgba(0,0,0,.6);overflow:hidden;"><div style="left:12%;top:34%;width:76%;height:60%;border-radius:40%;background:radial-gradient(ellipse at center,rgba(120,120,120,.62) 0%,rgba(90,90,90,.35) 45%,rgba(40,40,40,0) 75%);"></div></div><span class="t" style="top:256.44px;font-size:4.09px;line-height:5.73px;color:#e8e8e8;font-weight:700;left:790.00px;">SwitchWeapon</span><span class="t" style="top:262.19px;font-size:3.72px;line-height:5.21px;color:#8c9060;font-weight:400;left:790.00px;font-style:italic;">Collapsed Graph</span><svg style="left:791.30px;top:270.75px;" width="4.4" height="4.9" viewBox="0 0 4.4 4.9"><path d="M0.5 0.5h1.5l1.8 1.95-1.8 1.95h-1.5z" fill="#ffffff" stroke="#ffffff" stroke-width="0.5" stroke-linejoin="round"/></svg><div style="left:493.00px;top:350.80px;width:92.90px;height:64.30px;background:linear-gradient(#202020,#151515);border-radius:2.4px;box-shadow:0 0 0 0.5px #050505,0 1px 1.5px rgba(0,0,0,.6);overflow:hidden;"><div style="left:0;top:0;width:100%;height:7.20px;background:linear-gradient(100deg,#a01212 0%,#a01212 45%,#3a0a0a 100%);"></div><div style="left:0;top:0;width:100%;height:3.60px;background:linear-gradient(rgba(255,255,255,.2),rgba(255,255,255,.04));"></div></div><svg style="left:495.60px;top:352.30px;" width="4.6" height="4.6" viewBox="0 0 4.6 4.6"><path d="M2.85 0.55L0.83 2.30L2.85 4.05" fill="none" stroke="#fff" stroke-width="0.9"/><path d="M2.30 2.30h2.07" stroke="#fff" stroke-width="0.9"/></svg><span class="t" style="top:352.46px;font-size:3.92px;line-height:5.49px;color:#f4f4f4;font-weight:700;left:502.40px;">EnhancedInputAction InputAction_Fire</span><span class="t" style="top:362.65px;font-size:3.64px;line-height:5.1px;color:#dcdcdc;font-weight:700;right:446.90px;">Triggered</span><svg style="left:578.00px;top:362.15px;" width="4.4" height="4.9" viewBox="0 0 4.4 4.9"><path d="M0.5 0.5h1.5l1.8 1.95-1.8 1.95h-1.5z" fill="none" stroke="#c8c8c8" stroke-width="0.5" stroke-linejoin="round"/></svg><span class="t" style="top:372.68px;font-size:3.6px;line-height:5.04px;color:#dcdcdc;font-weight:700;right:446.90px;">Started</span><svg style="left:578.00px;top:372.15px;" width="4.4" height="4.9" viewBox="0 0 4.4 4.9"><path d="M0.5 0.5h1.5l1.8 1.95-1.8 1.95h-1.5z" fill="#ffffff" stroke="#ffffff" stroke-width="0.5" stroke-linejoin="round"/></svg><span class="t" style="top:382.61px;font-size:3.56px;line-height:4.98px;color:#dcdcdc;font-weight:700;right:446.90px;">Completed</span><svg style="left:578.00px;top:382.05px;" width="4.4" height="4.9" viewBox="0 0 4.4 4.9"><path d="M0.5 0.5h1.5l1.8 1.95-1.8 1.95h-1.5z" fill="#ffffff" stroke="#ffffff" stroke-width="0.5" stroke-linejoin="round"/></svg><span class="t" style="top:392.43px;font-size:3.67px;line-height:5.14px;color:#dcdcdc;font-weight:700;right:446.90px;">Action Value</span><svg style="left:577.90px;top:392.10px;" width="5.4" height="4.6" viewBox="0 0 5.4 4.6"><circle cx="2.1" cy="2.3" r="1.45" fill="none" stroke="#8c0a0a" stroke-width="0.7"/><path d="M4 1.5l0.9 0.8-0.9 0.8z" fill="#8c0a0a"/></svg><span class="t" style="top:401.44px;font-size:3.8px;line-height:5.32px;color:#dcdcdc;font-weight:700;right:446.90px;">Input Action</span><svg style="left:577.90px;top:401.20px;" width="5.4" height="4.6" viewBox="0 0 5.4 4.6"><circle cx="2.1" cy="2.3" r="1.45" fill="none" stroke="#129ae0" stroke-width="0.7"/><path d="M4 1.5l0.9 0.8-0.9 0.8z" fill="#129ae0"/></svg><svg style="left:537.80px;top:410.80px;" width="4" height="2.6" viewBox="0 0 4 2.6"><path d="M0.5 0.5l1.5 1.4 1.5-1.4" fill="none" stroke="#e0e0e0" stroke-width="0.8"/></svg><div style="left:599.30px;top:355.80px;width:40.70px;height:34.40px;background:linear-gradient(#222222,#161616);border-radius:2.4px;box-shadow:0 0 0 0.5px #050505,0 1px 1.5px rgba(0,0,0,.6);overflow:hidden;"><div style="left:12%;top:34%;width:76%;height:60%;border-radius:40%;background:radial-gradient(ellipse at center,rgba(120,120,120,.62) 0%,rgba(90,90,90,.35) 45%,rgba(40,40,40,0) 75%);"></div></div><span class="t" style="top:357.95px;font-size:3.93px;line-height:5.5px;color:#e8e8e8;font-weight:700;left:602.60px;">FireWeapon</span><span class="t" style="top:363.46px;font-size:3.78px;line-height:5.29px;color:#8c9060;font-weight:400;left:602.60px;font-style:italic;">Collapsed Graph</span><svg style="left:603.60px;top:372.15px;" width="4.4" height="4.9" viewBox="0 0 4.4 4.9"><path d="M0.5 0.5h1.5l1.8 1.95-1.8 1.95h-1.5z" fill="#ffffff" stroke="#ffffff" stroke-width="0.5" stroke-linejoin="round"/></svg><span class="t" style="top:372.65px;font-size:3.64px;line-height:5.1px;color:#dcdcdc;font-weight:700;left:609.30px;">Start</span><svg style="left:603.60px;top:382.05px;" width="4.4" height="4.9" viewBox="0 0 4.4 4.9"><path d="M0.5 0.5h1.5l1.8 1.95-1.8 1.95h-1.5z" fill="#ffffff" stroke="#ffffff" stroke-width="0.5" stroke-linejoin="round"/></svg><span class="t" style="top:382.71px;font-size:3.42px;line-height:4.79px;color:#dcdcdc;font-weight:700;left:609.30px;">Stop</span><div style="left:234.20px;top:68.50px;width:40.30px;height:14.20px;background:#585858;border-radius:2.2px;box-shadow:inset 0 0 0 0.6px #7c7c7c, inset 0 0 0 1.8px #585858, inset 0 0 0 2.2px #6c6c6c;"></div><svg style="left:237.60px;top:82.40px;" width="5" height="3" viewBox="0 0 5 3"><path d="M0 0h3.8l-1.9 2.8z" fill="#6e6e6e"/></svg><span class="t" style="top:72.24px;font-size:5.65px;line-height:7.91px;color:#d6d6d6;font-weight:400;left:254.35px;transform:translateX(-50%);">Begin Play</span><div style="left:209.00px;top:231.50px;width:28.50px;height:13.70px;background:#585858;border-radius:2.2px;box-shadow:inset 0 0 0 0.6px #7c7c7c, inset 0 0 0 1.8px #585858, inset 0 0 0 2.2px #6c6c6c;"></div><svg style="left:212.40px;top:244.90px;" width="5" height="3" viewBox="0 0 5 3"><path d="M0 0h3.8l-1.9 2.8z" fill="#6e6e6e"/></svg><span class="t" style="top:234.93px;font-size:5.74px;line-height:8.04px;color:#d6d6d6;font-weight:400;left:223.25px;transform:translateX(-50%);">WASD</span><div style="left:209.40px;top:359.70px;width:52.20px;height:12.20px;background:#585858;border-radius:2.2px;box-shadow:inset 0 0 0 0.6px #7c7c7c, inset 0 0 0 1.8px #585858, inset 0 0 0 2.2px #6c6c6c;"></div><svg style="left:212.80px;top:371.60px;" width="5" height="3" viewBox="0 0 5 3"><path d="M0 0h3.8l-1.9 2.8z" fill="#6e6e6e"/></svg><span class="t" style="top:362.24px;font-size:5.95px;line-height:8.33px;color:#d6d6d6;font-weight:400;left:235.50px;transform:translateX(-50%);">Jump &amp; Crouch</span><div style="left:478.40px;top:212.60px;width:32.40px;height:12.80px;background:#585858;border-radius:2.2px;box-shadow:inset 0 0 0 0.6px #7c7c7c, inset 0 0 0 1.8px #585858, inset 0 0 0 2.2px #6c6c6c;"></div><svg style="left:481.80px;top:225.10px;" width="5" height="3" viewBox="0 0 5 3"><path d="M0 0h3.8l-1.9 2.8z" fill="#6e6e6e"/></svg><span class="t" style="top:215.54px;font-size:5.8px;line-height:8.12px;color:#d6d6d6;font-weight:400;left:494.60px;transform:translateX(-50%);">Weapon</span><div style="left:478.20px;top:475.10px;width:28.80px;height:13.40px;background:#585858;border-radius:2.2px;box-shadow:inset 0 0 0 0.6px #7c7c7c, inset 0 0 0 1.8px #585858, inset 0 0 0 2.2px #6c6c6c;"></div><svg style="left:481.60px;top:488.20px;" width="5" height="3" viewBox="0 0 5 3"><path d="M0 0h3.8l-1.9 2.8z" fill="#6e6e6e"/></svg><span class="t" style="top:478.29px;font-size:5.88px;line-height:8.23px;color:#d6d6d6;font-weight:400;left:492.60px;transform:translateX(-50%);">Health</span><div style="left:452.20px;top:44.00px;width:72.40px;height:17.70px;background:linear-gradient(#202020,#151515);border-radius:2.4px;box-shadow:0 0 0 0.5px #050505,0 1px 1.5px rgba(0,0,0,.6);overflow:hidden;"></div><span class="t" style="top:52.85px;font-size:7.07px;line-height:9.9px;color:#949494;font-weight:700;left:487.60px;transform:translateX(-50%);">Subsystem</span><div style="left:143.00px;top:56.40px;width:732.00px;height:17.20px;background:rgba(0,0,0,.56);"></div><div style="left:164.50px;top:57.00px;width:0.80px;height:16.00px;background:rgba(60,60,60,.3);"></div><div style="left:201.80px;top:57.00px;width:0.80px;height:16.00px;background:rgba(60,60,60,.3);"></div><svg style="left:146.20px;top:61.20px;" width="7" height="9" viewBox="0 0 7 9"><path d="M0.3 0.3h3.6v5.6h-3.6z" fill="#585858"/><path d="M1.6 1h4.2v6.4l-2.1-1.7-2.1 1.7z" fill="#a4a4a4"/></svg><svg style="left:155.00px;top:63.60px;" width="6" height="4" viewBox="0 0 6 4"><path d="M0.8 0.8l2 2 2-2" stroke="#c8c8c8" stroke-width="0.9" fill="none"/></svg><svg style="left:169.30px;top:60.90px;" width="9" height="8" viewBox="0 0 9 8"><path d="M0.3 3.9l4-3.5v2.3h4.4v2.4h-4.4v2.3z" fill="#8c8c8c"/></svg><svg style="left:188.00px;top:60.90px;" width="9" height="8" viewBox="0 0 9 8"><path d="M8.7 3.9l-4-3.5v2.3h-4.4v2.4h4.4v2.3z" fill="#8c8c8c"/></svg><svg style="left:207.80px;top:60.50px;" width="11" height="10" viewBox="0 0 11 10"><rect x="0.3" y="0.4" width="4.2" height="3.8" fill="#d8d8d8"/><rect x="7" y="1" width="3.3" height="2.2" fill="#d8d8d8"/><rect x="7" y="6.6" width="3.3" height="2.2" fill="#d8d8d8"/><rect x="1.4" y="6.4" width="3" height="3" fill="#d8d8d8"/><path d="M4.4 2.2l2.8 0M3.8 3.8l3.6 3.8" stroke="#d8d8d8" stroke-width="0.9"/></svg><span class="t" style="top:59.41px;font-size:8.56px;line-height:11.98px;color:#a4a4a4;font-weight:400;left:225.70px;">BP_CharacterBase</span><svg style="left:301.30px;top:61.50px;" width="6" height="7" viewBox="0 0 6 7"><path d="M1.2 0.8l3 2.7-3 2.7" stroke="#a4a4a4" stroke-width="1" fill="none"/></svg><span class="t" style="top:59.41px;font-size:8.55px;line-height:11.97px;color:#a4a4a4;font-weight:400;left:312.00px;">Event Graph</span><span class="t" style="top:58.28px;font-size:9.6px;line-height:13.44px;color:#4c4c4c;left:839.80px;transform:scaleX(0.918);transform-origin:0 50%;">Zoom -3</span><span class="t" style="top:459.74px;font-size:31.8px;line-height:44.52px;color:rgba(110,110,110,.5);font-weight:700;left:733.70px;transform:scaleX(0.765);transform-origin:0 50%;letter-spacing:-0.3px;">BLUEPRINT</span></div></div>
<div style="left:140.50px;top:56.00px;width:2.50px;height:449.50px;background:#131313;"></div>
<div style="left:875.50px;top:43.00px;width:147.50px;height:580.00px;background:#151515;"></div>
<div style="left:877.50px;top:44.00px;width:72.00px;height:12.00px;background:#242424;border-radius:2px 2px 0 0;"></div>
<svg style="left:880.50px;top:46.00px;" width="8" height="8" viewBox="0 0 8 8"><path d="M0.6 7.4l0.8-2.4 4.4-4.4 1.6 1.6-4.4 4.4z" fill="#c8c8c8"/><path d="M0.4 7.8h5" stroke="#c8c8c8" stroke-width="0.6"/></svg>
<span class="t" style="top:46.40px;font-size:6.0px;line-height:8.4px;color:#d0d0d0;left:890.30px;">Details</span>
<span class="t" style="top:45.35px;font-size:7.5px;line-height:10.5px;color:#d0d0d0;left:941.70px;transform:translateX(-50%);">×</span>
<svg style="left:953.30px;top:46.30px;" width="8" height="8" viewBox="0 0 8 8"><path d="M0.5 1.2h1.2M2.8 1.2h4.6M0.5 3.9h1.2M2.8 3.9h4.6M0.5 6.6h1.2M2.8 6.6h4.6" stroke="#c8c8c8" stroke-width="1"/></svg>
<span class="t" style="top:46.40px;font-size:6.0px;line-height:8.4px;color:#c8c8c8;left:963.60px;">Palette</span>
<div style="left:877.50px;top:56.00px;width:145.50px;height:565.50px;background:#242424;"></div>
<div style="left:881.30px;top:60.30px;width:117.50px;height:9.70px;background:#0f0f0f;border-radius:4.85px;border:0.5px solid #262626;box-sizing:border-box;"></div><svg style="left:884.30px;top:61.95px;" width="7" height="7" viewBox="0 0 7 7"><circle cx="2.8" cy="2.8" r="2" fill="none" stroke="#d8d8d8" stroke-width="0.9"/><path d="M4.3 4.3l2 2" stroke="#d8d8d8" stroke-width="1"/></svg><span class="t" style="top:60.85px;font-size:6.0px;line-height:8.4px;color:#505050;left:893.50px;">Search</span>
<svg style="left:1005.00px;top:61.50px;" width="8" height="8" viewBox="0 0 8 8"><rect x="0.5" y="0.8" width="6.8" height="6.2" fill="none" stroke="#d4d4d4" stroke-width="0.9"/><rect x="0.5" y="0.8" width="6.8" height="1.8" fill="#d4d4d4"/><path d="M0.5 4.6h6.8M2.8 2.6v4.4M5.1 2.6v4.4" stroke="#d4d4d4" stroke-width="0.7"/></svg>
<svg style="left:1016.00px;top:61.00px;" width="9" height="9" viewBox="0 0 9 9"><g transform="translate(4.3,4.3)"><rect x="-0.7" y="-3.6" width="1.4" height="7.2" fill="#c4c4c4" transform="rotate(0)"/><rect x="-0.7" y="-3.6" width="1.4" height="7.2" fill="#c4c4c4" transform="rotate(45)"/><rect x="-0.7" y="-3.6" width="1.4" height="7.2" fill="#c4c4c4" transform="rotate(90)"/><rect x="-0.7" y="-3.6" width="1.4" height="7.2" fill="#c4c4c4" transform="rotate(135)"/><circle r="2.5" fill="#c4c4c4"/><circle r="1.2" fill="#242424"/></g></svg>
<div style="left:877.50px;top:74.30px;width:145.50px;height:11.40px;background:#2f2f2f;"></div>
<svg style="left:879.80px;top:78.30px;" width="5" height="4" viewBox="0 0 5 4"><path d="M0.3 0.5h4.4l-2.2 3z" fill="#9a9a9a"/></svg>
<span class="t" style="top:76.81px;font-size:5.7px;line-height:7.98px;color:#e4e4e4;font-weight:700;left:888.00px;transform:scaleX(0.869);transform-origin:0 50%;">Variable</span>
<div style="left:877.50px;top:86.16px;width:145.50px;height:12.69px;background:#242424;border-bottom:0.7px solid #1c1c1c;box-sizing:border-box;"></div>
<div style="left:887.60px;top:88.00px;width:47.00px;height:9.00px;overflow:hidden;"><span class="t" style="left:0;top:0.2px;font-size:5.35px;line-height:8.6px;color:#c8c8c8;">Variable Name</span></div>
<div style="left:940.60px;top:88.50px;width:57.50px;height:8.00px;background:#0f0f0f;border-radius:2px;"></div>
<span class="t" style="top:89.25px;font-size:5.5px;line-height:7.7px;color:#d8d8d8;left:943.80px;">Keys</span>
<div style="left:877.50px;top:98.84px;width:145.50px;height:12.69px;background:#242424;border-bottom:0.7px solid #1c1c1c;box-sizing:border-box;"></div>
<div style="left:887.60px;top:100.69px;width:47.00px;height:9.00px;overflow:hidden;"><span class="t" style="left:0;top:0.2px;font-size:5.35px;line-height:8.6px;color:#c8c8c8;">Variable Type</span></div>
<div style="left:940.60px;top:100.49px;width:54.00px;height:9.60px;background:#0f0f0f;border-radius:2px;"></div>
<div style="left:944.60px;top:103.69px;width:6.00px;height:3.10px;background:#2ee6b4;border-radius:1.6px;"></div>
<span class="t" style="top:101.94px;font-size:5.5px;line-height:7.7px;color:#d8d8d8;left:952.90px;">Integer</span>
<svg style="left:984.60px;top:103.49px;" width="6" height="4" viewBox="0 0 6 4"><path d="M0.8 0.8l2.2 2.2 2.2-2.2" stroke="#d0d0d0" stroke-width="0.9" fill="none"/></svg>
<div style="left:997.50px;top:103.69px;width:6.00px;height:3.10px;background:#2ee6b4;border-radius:1.6px;"></div>
<svg style="left:1005.00px;top:103.49px;" width="6" height="4" viewBox="0 0 6 4"><path d="M0.8 0.8l2.2 2.2 2.2-2.2" stroke="#d0d0d0" stroke-width="0.9" fill="none"/></svg>
<div style="left:877.50px;top:111.53px;width:145.50px;height:12.69px;background:#242424;border-bottom:0.7px solid #1c1c1c;box-sizing:border-box;"></div>
<div style="left:887.60px;top:113.38px;width:47.00px;height:9.00px;overflow:hidden;"><span class="t" style="left:0;top:0.2px;font-size:5.35px;line-height:8.6px;color:#c8c8c8;">Description</span></div>
<div style="left:940.60px;top:113.58px;width:72.50px;height:8.60px;background:#0f0f0f;border-radius:2px;"></div>
<div style="left:877.50px;top:124.22px;width:145.50px;height:12.69px;background:#242424;border-bottom:0.7px solid #1c1c1c;box-sizing:border-box;"></div>
<div style="left:887.60px;top:126.07px;width:47.00px;height:9.00px;overflow:hidden;"><span class="t" style="left:0;top:0.2px;font-size:5.35px;line-height:8.6px;color:#c8c8c8;">Instance Editable</span></div>
<div style="left:940.60px;top:126.97px;width:7.20px;height:7.20px;background:#0f0f0f;border-radius:2px;"></div>
<div style="left:877.50px;top:136.91px;width:145.50px;height:12.69px;background:#242424;border-bottom:0.7px solid #1c1c1c;box-sizing:border-box;"></div>
<div style="left:887.60px;top:138.76px;width:47.00px;height:9.00px;overflow:hidden;"><span class="t" style="left:0;top:0.2px;font-size:5.35px;line-height:8.6px;color:#c8c8c8;">Blueprint Read Only</span></div>
<div style="left:940.60px;top:139.66px;width:7.20px;height:7.20px;background:#0f0f0f;border-radius:2px;"></div>
<div style="left:877.50px;top:149.60px;width:145.50px;height:12.69px;background:#242424;border-bottom:0.7px solid #1c1c1c;box-sizing:border-box;"></div>
<div style="left:887.60px;top:151.45px;width:47.00px;height:9.00px;overflow:hidden;"><span class="t" style="left:0;top:0.2px;font-size:5.35px;line-height:8.6px;color:#c8c8c8;">Expose on Spawn</span></div>
<div style="left:940.60px;top:152.35px;width:7.20px;height:7.20px;background:#0f0f0f;border-radius:2px;"></div>
<div style="left:877.50px;top:162.29px;width:145.50px;height:12.69px;background:#242424;border-bottom:0.7px solid #1c1c1c;box-sizing:border-box;"></div>
<div style="left:887.60px;top:164.14px;width:47.00px;height:9.00px;overflow:hidden;"><span class="t" style="left:0;top:0.2px;font-size:5.35px;line-height:8.6px;color:#c8c8c8;">Private</span></div>
<div style="left:940.60px;top:165.04px;width:7.20px;height:7.20px;background:#0f0f0f;border-radius:2px;"></div>
<div style="left:877.50px;top:174.98px;width:145.50px;height:12.69px;background:#242424;border-bottom:0.7px solid #1c1c1c;box-sizing:border-box;"></div>
<div style="left:887.60px;top:176.83px;width:47.00px;height:9.00px;overflow:hidden;"><span class="t" style="left:0;top:0.2px;font-size:5.35px;line-height:8.6px;color:#c8c8c8;">Expose to Cinematics</span></div>
<div style="left:940.60px;top:177.73px;width:7.20px;height:7.20px;background:#0f0f0f;border-radius:2px;"></div>
<div style="left:877.50px;top:187.67px;width:145.50px;height:12.69px;background:#242424;border-bottom:0.7px solid #1c1c1c;box-sizing:border-box;"></div>
<div style="left:887.60px;top:189.52px;width:47.00px;height:9.00px;overflow:hidden;"><span class="t" style="left:0;top:0.2px;font-size:5.35px;line-height:8.6px;color:#c8c8c8;">Category</span></div>
<div style="left:940.60px;top:189.52px;width:57.50px;height:9.00px;background:#0f0f0f;border-radius:2px;"></div>
<div style="left:943.60px;top:189.72px;width:36.00px;height:8.30px;background:#1a1a1a;border:0.6px solid #303030;box-sizing:border-box;border-radius:1.5px;"></div>
<span class="t" style="top:190.27px;font-size:5.5px;line-height:7.7px;color:#d8d8d8;left:948.10px;">Default</span>
<svg style="left:985.10px;top:192.52px;" width="6" height="4" viewBox="0 0 6 4"><path d="M0.8 0.8l2.2 2.2 2.2-2.2" stroke="#d0d0d0" stroke-width="0.9" fill="none"/></svg>
<div style="left:877.50px;top:200.36px;width:145.50px;height:12.69px;background:#242424;border-bottom:0.7px solid #1c1c1c;box-sizing:border-box;"></div>
<div style="left:887.60px;top:202.21px;width:47.00px;height:9.00px;overflow:hidden;"><span class="t" style="left:0;top:0.2px;font-size:5.35px;line-height:8.6px;color:#c8c8c8;">Slider Range</span></div>
<div style="left:940.60px;top:202.51px;width:26.00px;height:8.40px;background:#0f0f0f;border-radius:2px;"></div>
<span class="t" style="top:203.46px;font-size:5.5px;line-height:7.7px;color:#707070;left:967.60px;">..</span>
<div style="left:972.10px;top:202.51px;width:26.00px;height:8.40px;background:#0f0f0f;border-radius:2px;"></div>
<div style="left:877.50px;top:213.05px;width:145.50px;height:12.69px;background:#242424;border-bottom:0.7px solid #1c1c1c;box-sizing:border-box;"></div>
<div style="left:887.60px;top:214.90px;width:47.00px;height:9.00px;overflow:hidden;"><span class="t" style="left:0;top:0.2px;font-size:5.35px;line-height:8.6px;color:#c8c8c8;">Value Range</span></div>
<div style="left:940.60px;top:215.20px;width:26.00px;height:8.40px;background:#0f0f0f;border-radius:2px;"></div>
<span class="t" style="top:216.15px;font-size:5.5px;line-height:7.7px;color:#707070;left:967.60px;">..</span>
<div style="left:972.10px;top:215.20px;width:26.00px;height:8.40px;background:#0f0f0f;border-radius:2px;"></div>
<div style="left:877.50px;top:225.75px;width:145.50px;height:12.69px;background:#242424;border-bottom:0.7px solid #1c1c1c;box-sizing:border-box;"></div>
<div style="left:887.60px;top:227.59px;width:47.00px;height:9.00px;overflow:hidden;"><span class="t" style="left:0;top:0.2px;font-size:5.35px;line-height:8.6px;color:#c8c8c8;">Units</span></div>
<div style="left:940.60px;top:227.59px;width:57.50px;height:9.00px;background:#0f0f0f;border-radius:2px;"></div>
<span class="t" style="top:228.84px;font-size:5.5px;line-height:7.7px;color:#d8d8d8;left:944.20px;">None</span>
<svg style="left:987.10px;top:230.59px;" width="6" height="4" viewBox="0 0 6 4"><path d="M0.8 0.8l2.2 2.2 2.2-2.2" stroke="#d0d0d0" stroke-width="0.9" fill="none"/></svg>
<div style="left:877.50px;top:238.44px;width:145.50px;height:12.69px;background:#242424;border-bottom:0.7px solid #1c1c1c;box-sizing:border-box;"></div>
<div style="left:887.60px;top:240.28px;width:47.00px;height:9.00px;overflow:hidden;"><span class="t" style="left:0;top:0.2px;font-size:5.35px;line-height:8.6px;color:#c8c8c8;">Bitmask</span></div>
<div style="left:940.60px;top:241.18px;width:7.20px;height:7.20px;background:#0f0f0f;border-radius:2px;"></div>
<div style="left:877.50px;top:251.13px;width:145.50px;height:12.69px;background:#242424;border-bottom:0.7px solid #1c1c1c;box-sizing:border-box;"></div>
<div style="left:887.60px;top:252.97px;width:47.00px;height:9.00px;overflow:hidden;"><span class="t" style="left:0;top:0.2px;font-size:5.35px;line-height:8.6px;color:#c8c8c8;">Bitmask Enum</span></div>
<div style="left:940.60px;top:252.97px;width:58.00px;height:9.00px;background:#383838;border-radius:1.5px;"></div>
<span class="t" style="top:254.22px;font-size:5.5px;line-height:7.7px;color:#7a7a7a;left:944.20px;">None</span>
<svg style="left:987.10px;top:255.97px;" width="6" height="4" viewBox="0 0 6 4"><path d="M0.8 0.8l2.2 2.2 2.2-2.2" stroke="#7a7a7a" stroke-width="0.9" fill="none"/></svg>
<div style="left:877.50px;top:263.81px;width:145.50px;height:12.69px;background:#242424;border-bottom:0.7px solid #1c1c1c;box-sizing:border-box;"></div>
<div style="left:887.60px;top:265.66px;width:47.00px;height:9.00px;overflow:hidden;"><span class="t" style="left:0;top:0.2px;font-size:5.35px;line-height:8.6px;color:#c8c8c8;">Replication</span></div>
<div style="left:940.60px;top:265.66px;width:57.50px;height:9.00px;background:#0f0f0f;border-radius:2px;"></div>
<span class="t" style="top:266.91px;font-size:5.5px;line-height:7.7px;color:#d8d8d8;left:944.20px;">None</span>
<svg style="left:987.10px;top:268.66px;" width="6" height="4" viewBox="0 0 6 4"><path d="M0.8 0.8l2.2 2.2 2.2-2.2" stroke="#d0d0d0" stroke-width="0.9" fill="none"/></svg>
<div style="left:877.50px;top:276.50px;width:145.50px;height:12.69px;background:#242424;border-bottom:0.7px solid #1c1c1c;box-sizing:border-box;"></div>
<div style="left:887.60px;top:278.35px;width:47.00px;height:9.00px;overflow:hidden;"><span class="t" style="left:0;top:0.2px;font-size:5.35px;line-height:8.6px;color:#c8c8c8;">Replication Condition</span></div>
<div style="left:940.60px;top:278.35px;width:58.00px;height:9.00px;background:#383838;border-radius:1.5px;"></div>
<span class="t" style="top:279.60px;font-size:5.5px;line-height:7.7px;color:#7a7a7a;left:944.20px;">None</span>
<svg style="left:987.10px;top:281.35px;" width="6" height="4" viewBox="0 0 6 4"><path d="M0.8 0.8l2.2 2.2 2.2-2.2" stroke="#7a7a7a" stroke-width="0.9" fill="none"/></svg>
<div style="left:935.20px;top:86.16px;width:0.70px;height:203.04px;background:#1c1c1c;"></div>
<div style="left:1014.30px;top:86.16px;width:0.70px;height:203.04px;background:#1c1c1c;"></div>
<div style="left:877.50px;top:289.20px;width:145.50px;height:14.00px;background:#242424;"></div>
<svg style="left:880.50px;top:292.40px;" width="4" height="6" viewBox="0 0 4 6"><path d="M0.5 0.3l3 2.7-3 2.7z" fill="#9a9a9a"/></svg>
<span class="t" style="top:292.25px;font-size:5.35px;line-height:7.49px;color:#c8c8c8;left:887.60px;">Advanced</span>
<div style="left:877.50px;top:303.20px;width:145.50px;height:9.80px;background:#2f2f2f;"></div>
<svg style="left:879.80px;top:306.30px;" width="5" height="4" viewBox="0 0 5 4"><path d="M0.3 0.5h4.4l-2.2 3z" fill="#9a9a9a"/></svg>
<span class="t" style="top:304.71px;font-size:5.7px;line-height:7.98px;color:#e4e4e4;font-weight:700;left:888.00px;transform:scaleX(0.860);transform-origin:0 50%;">Default Value</span>
<div style="left:877.50px;top:313.00px;width:145.50px;height:14.50px;background:#242424;border-bottom:0.7px solid #1c1c1c;box-sizing:border-box;"></div>
<div style="left:935.20px;top:313.00px;width:0.70px;height:14.50px;background:#1c1c1c;"></div>
<div style="left:1014.30px;top:313.00px;width:0.70px;height:14.50px;background:#1c1c1c;"></div>
<span class="t" style="top:317.66px;font-size:5.35px;line-height:7.49px;color:#c8c8c8;left:887.60px;">Keys</span>
<div style="left:940.60px;top:316.50px;width:57.50px;height:8.60px;background:#0f0f0f;border-radius:2px;"></div>
<span class="t" style="top:317.55px;font-size:5.5px;line-height:7.7px;color:#e0e0e0;left:944.60px;">0</span>
<div style="left:141.00px;top:505.00px;width:734.50px;height:117.50px;background:#151515;"></div>
<svg style="left:146.50px;top:508.50px;" width="8" height="8" viewBox="0 0 8 8"><rect x="0.6" y="0.8" width="6.4" height="6.6" fill="#c8c8c8"/><path d="M1.8 0.2v1.6M3.8 0.2v1.6M5.8 0.2v1.6" stroke="#151515" stroke-width="0.7"/><path d="M2 3.6l1.2 1-1.2 1M4 5.8h1.8" stroke="#151515" stroke-width="0.7" fill="none"/></svg>
<span class="t" style="top:508.80px;font-size:6.0px;line-height:8.4px;color:#c8c8c8;left:155.60px;">Compiler Results</span>
<div style="left:218.50px;top:506.00px;width:75.50px;height:12.60px;background:#242424;border-radius:2px 2px 0 0;"></div>
<svg style="left:221.50px;top:508.30px;" width="8" height="8" viewBox="0 0 8 8"><circle cx="3.1" cy="3.1" r="2.4" fill="none" stroke="#d8d8d8" stroke-width="0.9"/><path d="M4.9 4.9l2.4 2.4" stroke="#d8d8d8" stroke-width="1"/></svg>
<span class="t" style="top:508.80px;font-size:6.0px;line-height:8.4px;color:#d8d8d8;left:231.50px;">Find Results</span>
<span class="t" style="top:507.75px;font-size:7.5px;line-height:10.5px;color:#d0d0d0;left:285.50px;transform:translateX(-50%);">×</span>
<div style="left:143.00px;top:518.50px;width:732.00px;height:15.00px;background:#242424;"></div>
<div style="left:147.50px;top:522.00px;width:698.50px;height:9.60px;background:#0f0f0f;border-radius:4.8px;border:0.6px solid #2e2e2e;box-sizing:border-box;"></div>
<svg style="left:150.30px;top:523.70px;" width="7" height="7" viewBox="0 0 7 7"><circle cx="2.8" cy="2.8" r="2" fill="none" stroke="#d8d8d8" stroke-width="0.9"/><path d="M4.3 4.3l2 2" stroke="#d8d8d8" stroke-width="1"/></svg>
<span class="t" style="top:523.13px;font-size:6.1px;line-height:8.54px;color:#4e4e4e;left:160.20px;">Enter function or event name to find references...</span>
<div style="left:849.00px;top:522.00px;width:20.00px;height:9.60px;background:#383838;border-radius:1.5px;"></div>
<svg style="left:855.50px;top:523.30px;" width="7" height="7" viewBox="0 0 7 7"><path d="M1.2 6.2v-2.6l0.8-2.4h1l0.4 2v3zM5.8 6.2v-2.6l-0.8-2.4h-1l-0.4 2v3z" fill="#f0f0f0"/></svg>
<div style="left:143.00px;top:533.50px;width:732.00px;height:80.30px;background:#1a1a1a;"></div>
<div style="left:143.00px;top:613.80px;width:732.00px;height:7.70px;background:#212121;"></div>
<div style="left:0.00px;top:621.50px;width:1023.00px;height:1.80px;background:#0e0e0e;"></div>
<div style="left:0.00px;top:623.30px;width:1023.00px;height:16.70px;background:#1e1e1e;"></div>
<svg style="left:4.00px;top:627.50px;" width="9" height="8" viewBox="0 0 9 8"><path d="M0.5 0.8h2.6l0.8 0.9h2.7v5.6h-6.1z" fill="#c4c4c4"/><rect x="4.6" y="3.2" width="3.8" height="4.3" fill="#1e1e1e" stroke="#c4c4c4" stroke-width="0.7"/></svg>
<span class="t" style="top:628.00px;font-size:6.0px;line-height:8.4px;color:#c8c8c8;left:13.80px;">Content Drawer</span>
<div style="left:59.70px;top:623.30px;width:1.20px;height:16.70px;background:#121212;"></div>
<div style="left:109.00px;top:623.30px;width:1.20px;height:16.70px;background:#121212;"></div>
<svg style="left:66.50px;top:627.50px;" width="8" height="8" viewBox="0 0 8 8"><rect x="0.6" y="0.8" width="6.4" height="6.6" fill="#c4c4c4"/><path d="M1.8 0.2v1.6M3.8 0.2v1.6M5.8 0.2v1.6" stroke="#1e1e1e" stroke-width="0.7"/><path d="M2 3.6l1.2 1-1.2 1M4 5.8h1.8" stroke="#1e1e1e" stroke-width="0.7" fill="none"/></svg>
<span class="t" style="top:628.00px;font-size:6.0px;line-height:8.4px;color:#c8c8c8;left:75.80px;">Output Log</span>
<svg style="left:117.00px;top:627.80px;" width="8" height="7" viewBox="0 0 8 7"><rect x="0.5" y="0.6" width="6.8" height="5.6" fill="none" stroke="#c4c4c4" stroke-width="0.8"/><path d="M1.8 2.2l1.2 1.1-1.2 1.1M3.8 4.8h2" stroke="#c4c4c4" stroke-width="0.7" fill="none"/></svg>
<span class="t" style="top:628.00px;font-size:6.0px;line-height:8.4px;color:#c8c8c8;left:126.30px;">Cmd</span>
<svg style="left:140.50px;top:629.70px;" width="6" height="4" viewBox="0 0 6 4"><path d="M0.8 0.8l2.2 2.2 2.2-2.2" stroke="#c4c4c4" stroke-width="0.9" fill="none"/></svg>
<div style="left:153.00px;top:626.00px;width:140.50px;height:9.60px;background:#0f0f0f;border-radius:2px;border:0.6px solid #303030;box-sizing:border-box;"></div>
<span class="t" style="top:627.71px;font-size:5.7px;line-height:7.98px;color:#555;left:156.80px;font-family:'Liberation Mono',monospace;">Enter Console Command</span>
<div style="left:902.50px;top:625.00px;width:0.80px;height:13.00px;background:#0e0e0e;"></div>
<svg style="left:909.00px;top:627.70px;" width="8" height="8" viewBox="0 0 8 8"><path d="M0.5 0.5h5l1.6 1.6v5h-6.6z" fill="#c4c4c4"/><rect x="1.8" y="0.5" width="3" height="2" fill="#1e1e1e"/><circle cx="5.6" cy="5.8" r="1.9" fill="#1e1e1e"/><path d="M4.6 5.8l0.8 0.8 1.3-1.5" stroke="#c4c4c4" stroke-width="0.7" fill="none"/></svg>
<span class="t" style="top:628.00px;font-size:6.0px;line-height:8.4px;color:#c8c8c8;left:918.70px;">All Saved</span>
<div style="left:951.50px;top:625.00px;width:0.80px;height:13.00px;background:#0e0e0e;"></div>
<svg style="left:957.00px;top:627.50px;" width="8" height="8" viewBox="0 0 8 8"><circle cx="1.8" cy="1.5" r="1.1" fill="#c4c4c4"/><circle cx="1.8" cy="6.5" r="1.1" fill="#c4c4c4"/><circle cx="5.8" cy="1.8" r="1.1" fill="#c4c4c4"/><path d="M1.8 1.5v5M5.8 2v1.2c0 1-4 0.8-4 2" stroke="#c4c4c4" stroke-width="0.7" fill="none"/></svg>
<span class="t" style="top:628.00px;font-size:6.0px;line-height:8.4px;color:#c8c8c8;left:966.20px;">Revision Control</span>
<svg style="left:1011.50px;top:629.70px;" width="6" height="4" viewBox="0 0 6 4"><path d="M0.8 0.8l2.2 2.2 2.2-2.2" stroke="#c4c4c4" stroke-width="0.9" fill="none"/></svg>
<div style="left:1.3px;top:590px;width:150.2px;height:23.7px;border:2.2px solid #ee1c25;box-sizing:border-box;"></div><div style="left:873.9px;top:301.9px;width:113.3px;height:37.3px;border:2.3px solid #ee1c25;box-sizing:border-box;"></div>
</div></body></html>
